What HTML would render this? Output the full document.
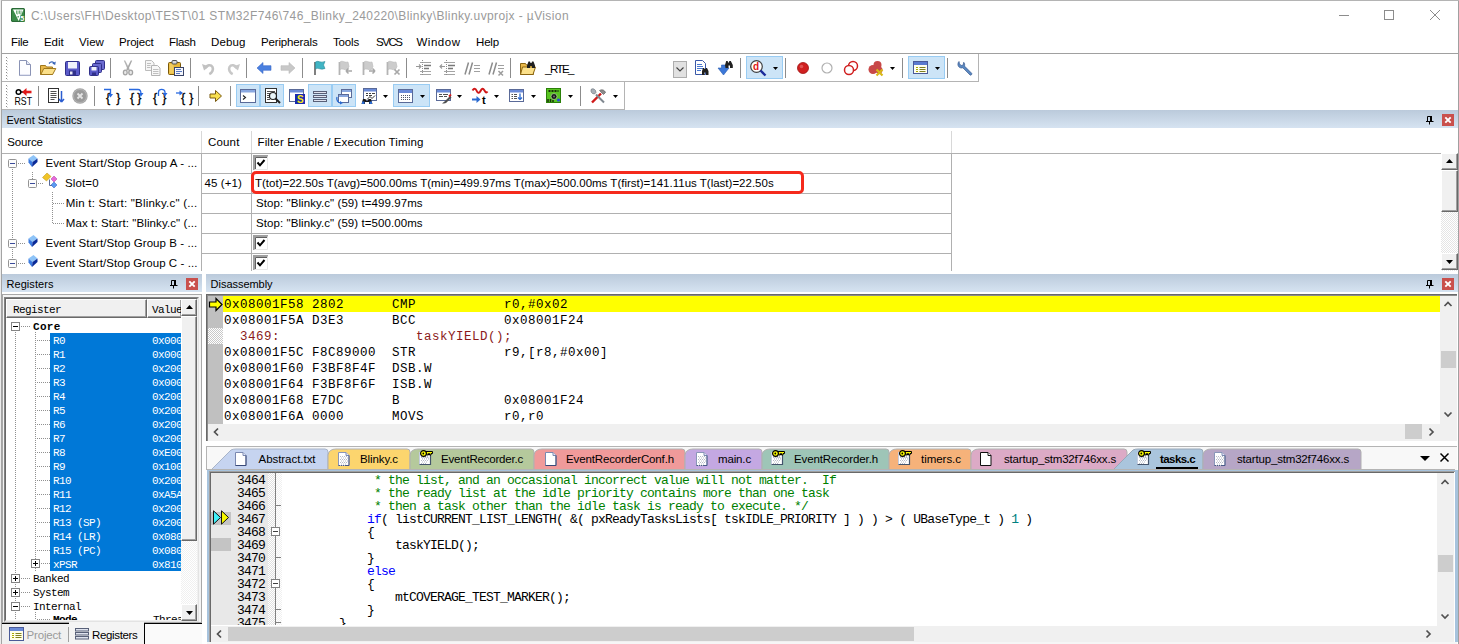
<!DOCTYPE html>
<html><head><meta charset="utf-8"><title>uVision</title>
<style>
html,body{margin:0;padding:0}
body{width:1459px;height:644px;overflow:hidden;background:#fff;position:relative;font-family:'Liberation Sans',sans-serif;}
.t{position:absolute;white-space:pre;line-height:16px;}
div{box-sizing:border-box}
.e{position:absolute;white-space:pre;font:13px/13px 'Liberation Mono',monospace;letter-spacing:-0.8px;color:#000}
</style></head><body>
<div style="position:absolute;left:0px;top:0px;width:1459px;height:1px;background:#b4b4b4;"></div>
<div style="position:absolute;left:0px;top:0px;width:1px;height:644px;background:#ececec;"></div>
<div style="position:absolute;left:1px;top:1px;width:1px;height:643px;background:#a4a4a4;"></div>
<svg style="position:absolute;left:11px;top:8px;overflow:visible" width="14" height="14" viewBox="0 0 14 14"><rect x="0" y="0" width="14" height="14" rx="1.8" fill="#327a3e"/>
<rect x=".5" y=".5" width="13" height="13" rx="1.5" fill="#3a8a48" stroke="#2a6a36"/>
<path d="M2 1.500h10.500l-4.800 11.500z" fill="#fff"/>
<path d="M5.500 2.500v3c0 .8 1.500 .8 1.500 0v-3M8.500 2.500v3c0 .8 1.500 .8 1.500 0v-3" fill="none" stroke="#4a9a58" stroke-width=".8"/>
<path d="M6 8.800l2.200-1-1 2.200z" fill="#3a8a48"/>
<rect x="9" y="7.500" width="5" height="6" fill="#3a8a48"/>
<text x="9.300" y="13" font-size="7" font-weight="bold" fill="#fff" font-family="Liberation Sans, sans-serif">5</text></svg>
<span class="t" style="left:31px;top:8px;font-size:12px;color:#9a9a9a;letter-spacing:0.390px;">C:\Users\FH\Desktop\TEST\01 STM32F746\746_Blinky_240220\Blinky\Blinky.uvprojx - µVision</span>
<svg style="position:absolute;left:1338px;top:8px;overflow:visible" width="110" height="16" viewBox="0 0 110 16"><path d="M1 7.5h10" stroke="#8c8c8c" stroke-width="1"/>
<rect x="46.5" y="2.5" width="9" height="9" fill="none" stroke="#8c8c8c"/>
<path d="M92 2l10 10M102 2l-10 10" stroke="#8c8c8c" stroke-width="1"/></svg>
<span class="t" style="left:11px;top:34px;font-size:11.5px;color:#000;letter-spacing:-0.258px;">File</span>
<span class="t" style="left:44px;top:34px;font-size:11.5px;color:#000;letter-spacing:-0.082px;">Edit</span>
<span class="t" style="left:79px;top:34px;font-size:11.5px;color:#000;letter-spacing:0.070px;">View</span>
<span class="t" style="left:119px;top:34px;font-size:11.5px;color:#000;letter-spacing:-0.185px;">Project</span>
<span class="t" style="left:169px;top:34px;font-size:11.5px;color:#000;letter-spacing:-0.325px;">Flash</span>
<span class="t" style="left:211px;top:34px;font-size:11.5px;color:#000;letter-spacing:0.122px;">Debug</span>
<span class="t" style="left:261px;top:34px;font-size:11.5px;color:#000;letter-spacing:-0.152px;">Peripherals</span>
<span class="t" style="left:333px;top:34px;font-size:11.5px;color:#000;letter-spacing:-0.172px;">Tools</span>
<span class="t" style="left:376px;top:34px;font-size:11.5px;color:#000;letter-spacing:-1.457px;">SVCS</span>
<span class="t" style="left:416.5px;top:34px;font-size:11.5px;color:#000;letter-spacing:0.516px;">Window</span>
<span class="t" style="left:476px;top:34px;font-size:11.5px;color:#000;letter-spacing:-0.164px;">Help</span>
<div style="position:absolute;left:2px;top:53px;width:1457px;height:1px;background:#a0a0a0;"></div>
<div style="position:absolute;left:2px;top:54px;width:977px;height:28px;border-right:1px solid #b4b4b4;border-bottom:1px solid #b4b4b4;"></div>
<div style="position:absolute;left:2px;top:82px;width:623px;height:28px;border-right:1px solid #b4b4b4;border-bottom:1px solid #b4b4b4;"></div>
<svg style="position:absolute;left:6px;top:57px;overflow:visible" width="3" height="24" viewBox="0 0 3 24"><rect x="0" y="0" width="1" height="1" fill="#8a8a8a"/><rect x="1" y="1" width="1" height="1" fill="#d8d8d8"/><rect x="0" y="3" width="1" height="1" fill="#8a8a8a"/><rect x="1" y="4" width="1" height="1" fill="#d8d8d8"/><rect x="0" y="6" width="1" height="1" fill="#8a8a8a"/><rect x="1" y="7" width="1" height="1" fill="#d8d8d8"/><rect x="0" y="9" width="1" height="1" fill="#8a8a8a"/><rect x="1" y="10" width="1" height="1" fill="#d8d8d8"/><rect x="0" y="12" width="1" height="1" fill="#8a8a8a"/><rect x="1" y="13" width="1" height="1" fill="#d8d8d8"/><rect x="0" y="15" width="1" height="1" fill="#8a8a8a"/><rect x="1" y="16" width="1" height="1" fill="#d8d8d8"/><rect x="0" y="18" width="1" height="1" fill="#8a8a8a"/><rect x="1" y="19" width="1" height="1" fill="#d8d8d8"/><rect x="0" y="21" width="1" height="1" fill="#8a8a8a"/><rect x="1" y="22" width="1" height="1" fill="#d8d8d8"/></svg>
<svg style="position:absolute;left:6px;top:85px;overflow:visible" width="3" height="24" viewBox="0 0 3 24"><rect x="0" y="0" width="1" height="1" fill="#8a8a8a"/><rect x="1" y="1" width="1" height="1" fill="#d8d8d8"/><rect x="0" y="3" width="1" height="1" fill="#8a8a8a"/><rect x="1" y="4" width="1" height="1" fill="#d8d8d8"/><rect x="0" y="6" width="1" height="1" fill="#8a8a8a"/><rect x="1" y="7" width="1" height="1" fill="#d8d8d8"/><rect x="0" y="9" width="1" height="1" fill="#8a8a8a"/><rect x="1" y="10" width="1" height="1" fill="#d8d8d8"/><rect x="0" y="12" width="1" height="1" fill="#8a8a8a"/><rect x="1" y="13" width="1" height="1" fill="#d8d8d8"/><rect x="0" y="15" width="1" height="1" fill="#8a8a8a"/><rect x="1" y="16" width="1" height="1" fill="#d8d8d8"/><rect x="0" y="18" width="1" height="1" fill="#8a8a8a"/><rect x="1" y="19" width="1" height="1" fill="#d8d8d8"/><rect x="0" y="21" width="1" height="1" fill="#8a8a8a"/><rect x="1" y="22" width="1" height="1" fill="#d8d8d8"/></svg>
<svg style="position:absolute;left:17px;top:60px;overflow:visible" width="16" height="16" viewBox="0 0 16 16"><path d="M2.5 .5h7l4 4v11h-11z" fill="#fdfdff" stroke="#8a93b5"/><path d="M9.5 .5v4h4" fill="#e4e8f6" stroke="#8a93b5"/><path d="M3 15h10" stroke="#c8cde4"/></svg>
<svg style="position:absolute;left:40px;top:60px;overflow:visible" width="16" height="16" viewBox="0 0 16 16"><path d="M.5 5.5h5l1 1.5h6v7.5h-12z" fill="#e8b84a" stroke="#a0781c"/><path d="M.8 14.5l3-6h12l-3.2 6z" fill="#fbe08a" stroke="#a0781c"/><path d="M9 3.5c2-2.3 4.5-2 5.5.6" fill="none" stroke="#3a66b8" stroke-width="1.2"/><path d="M15.8 1.5l-.6 3.6-3-1.6z" fill="#3a66b8"/></svg>
<svg style="position:absolute;left:65px;top:60px;overflow:visible" width="16" height="16" viewBox="0 0 16 16"><rect x=".5" y="1.500" width="14" height="14" rx="1" fill="#5a5ac8" stroke="#30308a"/><rect x="3" y="2" width="9" height="6.5" fill="#f0f2fc"/><rect x="4" y="10.500" width="7" height="5" fill="#30308a"/><rect x="5" y="11.500" width="2.500" height="3" fill="#e8e8f4"/></svg>
<svg style="position:absolute;left:89px;top:60px;overflow:visible" width="16" height="16" viewBox="0 0 16 16"><rect x="6.500" y=".5" width="9" height="9" rx="1" fill="#6a6ad0" stroke="#30308a"/><rect x="3.500" y="3.500" width="9" height="9" rx="1" fill="#6a6ad0" stroke="#30308a"/><rect x=".5" y="6.500" width="9" height="9" rx="1" fill="#5a5ac8" stroke="#30308a"/><rect x="2.500" y="7" width="5" height="3.500" fill="#f0f2fc"/><rect x="3" y="12.500" width="4" height="3" fill="#30308a"/></svg>
<div style="position:absolute;left:110px;top:58px;width:1px;height:20px;background:#8c8c8c;"></div>
<svg style="position:absolute;left:120px;top:60px;overflow:visible" width="16" height="16" viewBox="0 0 16 16"><path d="M3.800 .5h1.400l4.600 9-1.600 1.200z" fill="#b4b4b4"/><path d="M12.200 .5h-1.400l-4.600 9 1.600 1.200z" fill="#a8a8a8"/><ellipse cx="5.300" cy="12.500" rx="1.900" ry="2.400" fill="#e8e8e8" stroke="#a4a4a4" stroke-width="1.300"/><ellipse cx="10.700" cy="12.500" rx="1.900" ry="2.400" fill="#e8e8e8" stroke="#a4a4a4" stroke-width="1.300"/></svg>
<svg style="position:absolute;left:145px;top:60px;overflow:visible" width="16" height="16" viewBox="0 0 16 16"><path d="M.5 .5h6l2.500 2.500v7.500h-8.500z" fill="#f6f6f6" stroke="#bcbcbc"/><path d="M6.500 5.500h6l2.500 2.500v7.500h-8.500z" fill="#f8f8f8" stroke="#b4b4b4"/><path d="M8 9.500h5.500M8 11.500h5.500M8 13.500h5.500M2 3.500h4M2 5.500h3.500M2 7.500h3.500" stroke="#c0c0c0"/></svg>
<svg style="position:absolute;left:168px;top:60px;overflow:visible" width="16" height="16" viewBox="0 0 16 16"><rect x=".5" y="2.500" width="12" height="12" rx="1" fill="#e8b838" stroke="#7a5808"/><path d="M1.500 4v9.500h4v-9.500z" fill="#f8d878" opacity=".6"/><rect x="4" y=".5" width="5" height="3.500" rx="1" fill="#d8d8d8" stroke="#505050"/><rect x="6.500" y="7.500" width="9" height="8" fill="#f4f6fc" stroke="#3a4468"/><path d="M8 9.500h5M8 11.500h6M8 13.500h4" stroke="#5a7ac0"/></svg>
<div style="position:absolute;left:190px;top:58px;width:1px;height:20px;background:#8c8c8c;"></div>
<svg style="position:absolute;left:201px;top:60px;overflow:visible" width="16" height="16" viewBox="0 0 16 16"><path d="M4.500 8c1-3.200 5.500-3.800 7-1 1.200 2.500-.3 5.800-3.200 7.200" fill="none" stroke="#c2c2c2" stroke-width="2.600"/><path d="M1 4l2 6.500 5-4z" fill="#c2c2c2"/></svg>
<svg style="position:absolute;left:225px;top:60px;overflow:visible" width="16" height="16" viewBox="0 0 16 16"><path d="M11.500 8c-1-3.200-5.500-3.800-7-1-1.200 2.500.3 5.800 3.200 7.200" fill="none" stroke="#c8c8c8" stroke-width="2.600"/><path d="M15 4l-2 6.500-5-4z" fill="#c8c8c8"/></svg>
<div style="position:absolute;left:246px;top:58px;width:1px;height:20px;background:#8c8c8c;"></div>
<svg style="position:absolute;left:256px;top:60px;overflow:visible" width="16" height="16" viewBox="0 0 16 16"><path d="M1 8l6-5.500v3.200h8v4.600h-8v3.200z" fill="#4a80e0" stroke="#3a68c8" stroke-width=".6"/></svg>
<svg style="position:absolute;left:280px;top:60px;overflow:visible" width="16" height="16" viewBox="0 0 16 16"><path d="M15 8l-6-5.500v3.200h-8v4.600h8v3.200z" fill="#c8c8c8" stroke="#b8b8b8" stroke-width=".6"/></svg>
<div style="position:absolute;left:302px;top:58px;width:1px;height:20px;background:#8c8c8c;"></div>
<svg style="position:absolute;left:312px;top:60px;overflow:visible" width="16" height="16" viewBox="0 0 16 16"><path d="M3 2v13" stroke="#606060" stroke-width="1.600"/><path d="M3.500 2c2.500-2 5 1.500 9.500-.5l-1.500 3.500 1.500 3.500c-4.500 2-7-1.500-9.500.5z" fill="#40b4c4" stroke="#2a8a98" stroke-width=".6"/></svg>
<svg style="position:absolute;left:337px;top:60px;overflow:visible" width="16" height="16" viewBox="0 0 16 16"><path d="M2.500 2v13" stroke="#b4b4b4" stroke-width="1.800"/><path d="M3 2c2.500-2 4.500 1 8 0l1 4.500-1.500 3c-3 1-5-1.500-7.500 0z" fill="#cccccc" stroke="#b8b8b8" stroke-width=".6"/><path d="M15 11h-6m0 0l2.500-2.500M9 11l2.500 2.500" stroke="#a8a8a8" stroke-width="1.500" fill="none"/></svg>
<svg style="position:absolute;left:361px;top:60px;overflow:visible" width="16" height="16" viewBox="0 0 16 16"><path d="M2.500 2v13" stroke="#b4b4b4" stroke-width="1.800"/><path d="M3 2c2.500-2 4.500 1 8 0l1 4.500-1.500 3c-3 1-5-1.500-7.500 0z" fill="#cccccc" stroke="#b8b8b8" stroke-width=".6"/><path d="M8 11h6m0 0l-2.500-2.500M14 11l-2.500 2.500" stroke="#a8a8a8" stroke-width="1.500" fill="none"/></svg>
<svg style="position:absolute;left:385px;top:60px;overflow:visible" width="16" height="16" viewBox="0 0 16 16"><path d="M2.500 2v13" stroke="#b4b4b4" stroke-width="1.800"/><path d="M3 2c2.500-2 4.500 1 8 0l1 4.500-1.500 3c-3 1-5-1.500-7.500 0z" fill="#cccccc" stroke="#b8b8b8" stroke-width=".6"/><path d="M9.500 9.500l5 5m0-5l-5 5" stroke="#a8a8a8" stroke-width="1.700" fill="none"/></svg>
<div style="position:absolute;left:406px;top:58px;width:1px;height:20px;background:#8c8c8c;"></div>
<svg style="position:absolute;left:416px;top:60px;overflow:visible" width="16" height="16" viewBox="0 0 16 16"><path d="M4 2.500h11M4 11.500h11M4 14.500h11" stroke="#a4a4a4"/><path d="M8 5.500h7M8 8.500h5" stroke="#787878" stroke-width="1.400"/><path d="M6.500 0v16" stroke="#909090" stroke-dasharray="1 1"/><path d="M0 6.500h5M3 4.500l2 2-2 2" stroke="#989898" stroke-width="1.100" fill="none"/></svg>
<svg style="position:absolute;left:440px;top:60px;overflow:visible" width="16" height="16" viewBox="0 0 16 16"><path d="M4 2.500h11M4 11.500h11M4 14.500h11" stroke="#a4a4a4"/><path d="M8 5.500h7M8 8.500h5" stroke="#787878" stroke-width="1.400"/><path d="M6.500 0v16" stroke="#909090" stroke-dasharray="1 1"/><path d="M5 6.500h-5M2 4.500l-2 2 2 2" stroke="#989898" stroke-width="1.100" fill="none"/></svg>
<svg style="position:absolute;left:464px;top:60px;overflow:visible" width="16" height="16" viewBox="0 0 16 16"><path d="M1 14.500l3.500-12M5 14.500l3.500-12" stroke="#8c8c8c" stroke-width="1.500"/><path d="M10 5.500h6M10 8.500h6M10 11.500h6" stroke="#a0a0a0" stroke-width="1.200"/></svg>
<svg style="position:absolute;left:488px;top:60px;overflow:visible" width="16" height="16" viewBox="0 0 16 16"><path d="M1 14.500l3.500-12M5 14.500l3.500-12" stroke="#8c8c8c" stroke-width="1.500"/><path d="M10 5.500h6M10 8.500h6" stroke="#a0a0a0" stroke-width="1.200"/><path d="M10.500 11l4.500 4.500m0-4.500l-4.500 4.500" stroke="#9c9c9c" stroke-width="1.500"/></svg>
<div style="position:absolute;left:510px;top:58px;width:1px;height:20px;background:#8c8c8c;"></div>
<svg style="position:absolute;left:520px;top:60px;overflow:visible" width="16" height="16" viewBox="0 0 16 16"><path d="M.5 3.500h5l1 1.500h7v9.500h-13z" fill="#e8b84a" stroke="#8a6410"/><path d="M.5 14.500l2-7.500h13l-2.500 7.500z" fill="#fbe08a" stroke="#8a6410"/><path d="M7 5.500l1.500-4h1.500l.5 1.500h1l.5-1.500h1.500l1.500 4v2.500h-3v-2h-2v2h-3z" fill="#202020"/></svg>
<span class="t" style="left:545px;top:61px;font-size:11.5px;color:#000;letter-spacing:-1.519px;">_RTE_</span>
<div style="position:absolute;left:673px;top:61px;width:14px;height:17px;background:#e1e1e1;border:1px solid #adadad;"></div>
<svg style="position:absolute;left:676px;top:67px;overflow:visible" width="8" height="5" viewBox="0 0 8 5"><path d="M.5 .5l3.500 3.500 3.500-3.500" fill="none" stroke="#404040" stroke-width="1.100"/></svg>
<svg style="position:absolute;left:694px;top:60px;overflow:visible" width="16" height="16" viewBox="0 0 16 16"><path d="M1.500 .5h7l3 3v11h-10z" fill="#fff" stroke="#3a58a8"/><path d="M3 4.500h5M3 6.500h6M3 8.500h6M3 10.500h4" stroke="#4a78d0"/><path d="M8 11l1-3h1.200l.3 1h1l.3-1h1.200l1.500 3v4h-2.500v-2.500h-1.500v2.500h-2.500z" fill="#202020"/></svg>
<svg style="position:absolute;left:717px;top:60px;overflow:visible" width="16" height="16" viewBox="0 0 16 16"><path d="M2 6h3.500v-3h4v3h3.500l-5.500 7z" fill="#3c78d8" stroke="#2a5cb0" stroke-width=".6" transform="translate(-1,2)"/><path d="M8 5l1.200-4h1.500l.3 1.500h1l.3-1.500h1.500l2 4v3h-2.800v-2.500h-1.500v2.500h-3z" fill="#202020"/></svg>
<div style="position:absolute;left:740px;top:58px;width:1px;height:20px;background:#8c8c8c;"></div>
<div style="position:absolute;left:746px;top:56px;width:37px;height:23px;background:#cce4f7;border:1px solid #99ccf3;"></div>
<svg style="position:absolute;left:750px;top:60px;overflow:visible" width="16" height="16" viewBox="0 0 16 16"><circle cx="6.500" cy="6.500" r="5.800" fill="#fff" stroke="#404040" stroke-width="1.200"/><path d="M10.500 10.500l5 5" stroke="#1a2a9a" stroke-width="2.400"/><text x="3" y="10" font-size="10" font-weight="bold" fill="#e01818" font-family="Liberation Sans, sans-serif">d</text></svg>
<svg style="position:absolute;left:773px;top:67px;overflow:visible" width="5" height="3" viewBox="0 0 5 3"><path d="M0 0h5l-2.5 3z" fill="#000"/></svg>
<div style="position:absolute;left:785px;top:58px;width:1px;height:20px;background:#8c8c8c;"></div>
<svg style="position:absolute;left:795px;top:60px;overflow:visible" width="16" height="16" viewBox="0 0 16 16"><circle cx="8" cy="8" r="5.500" fill="#d02020" stroke="#a01010" stroke-width=".8"/><circle cx="6.500" cy="6.500" r="1.800" fill="#e86a6a" opacity=".7"/></svg>
<svg style="position:absolute;left:819px;top:60px;overflow:visible" width="16" height="16" viewBox="0 0 16 16"><circle cx="8" cy="8" r="5" fill="#fff" stroke="#b0b0b0" stroke-width="1.200"/></svg>
<svg style="position:absolute;left:843px;top:60px;overflow:visible" width="16" height="16" viewBox="0 0 16 16"><circle cx="10" cy="6" r="4.500" fill="#fff" stroke="#d02020" stroke-width="1.500"/><circle cx="6" cy="10" r="4.500" fill="#fff" stroke="#d02020" stroke-width="1.500"/></svg>
<svg style="position:absolute;left:868px;top:60px;overflow:visible" width="16" height="16" viewBox="0 0 16 16"><circle cx="9.500" cy="5" r="4" fill="#c84848"/><circle cx="5" cy="9.500" r="4.500" fill="#c84848"/><circle cx="11" cy="10" r="3.500" fill="#c84848"/><path d="M8.500 9.500l6 6m0-6l-6 6" stroke="#d8b818" stroke-width="2.200"/></svg>
<svg style="position:absolute;left:890px;top:67px;overflow:visible" width="5" height="3" viewBox="0 0 5 3"><path d="M0 0h5l-2.5 3z" fill="#000"/></svg>
<div style="position:absolute;left:902px;top:58px;width:1px;height:20px;background:#8c8c8c;"></div>
<div style="position:absolute;left:908px;top:56px;width:37px;height:23px;background:#cce4f7;border:1px solid #99ccf3;"></div>
<svg style="position:absolute;left:913px;top:60px;overflow:visible" width="16" height="16" viewBox="0 0 16 16"><rect x=".5" y="1.500" width="14" height="12" fill="#fffff0" stroke="#4a5a98"/><rect x="1" y="2" width="13" height="3" fill="#5a7ad0"/><path d="M3 7.500h2M3 9.500h2M3 11.500h2" stroke="#a8a800" stroke-width="1.200"/><path d="M6.500 7.500h6M6.500 9.500h6M6.500 11.500h6" stroke="#808020" stroke-width="1.200"/></svg>
<svg style="position:absolute;left:935px;top:67px;overflow:visible" width="5" height="3" viewBox="0 0 5 3"><path d="M0 0h5l-2.5 3z" fill="#000"/></svg>
<div style="position:absolute;left:947px;top:58px;width:1px;height:20px;background:#8c8c8c;"></div>
<svg style="position:absolute;left:957px;top:60px;overflow:visible" width="16" height="16" viewBox="0 0 16 16"><path d="M2 1.500c-1.500 1.500-1.500 4 0 5.500 1 1 2.500 1.200 3.800.8l7.200 7.200c.8.800 2.500-.8 1.700-1.700l-7.200-7.200c.4-1.300.2-2.800-.8-3.800l-.5 2.700-2 .5-1.700-1.700z" fill="#5a88c0" stroke="#3a5a90" stroke-width=".7"/></svg>
<svg style="position:absolute;left:15px;top:88px;overflow:visible" width="16" height="16" viewBox="0 0 16 16"><circle cx="3.500" cy="4" r="2.300" fill="none" stroke="#000" stroke-width="1.500"/><path d="M5.500 4h3" stroke="#000" stroke-width="1.400"/><path d="M16.500 4h-6" stroke="#e01818" stroke-width="2.600"/><path d="M7 4l4.500-4v8z" fill="#e01818"/><text x="-.5" y="17" font-size="10.500" fill="#000" font-family="Liberation Sans, sans-serif" textLength="17.500" lengthAdjust="spacingAndGlyphs">RST</text></svg>
<div style="position:absolute;left:38px;top:86px;width:1px;height:20px;background:#8c8c8c;"></div>
<svg style="position:absolute;left:48px;top:88px;overflow:visible" width="16" height="16" viewBox="0 0 16 16"><rect x=".5" y=".5" width="10" height="14" fill="#fff" stroke="#303030"/><path d="M2.500 3.500h6M2.500 5.500h6M2.500 7.500h6M2.500 9.500h6M2.500 11.500h4" stroke="#505050"/><path d="M13.500 3v11m0 0l-2.500-3m2.500 3l2.500-3" stroke="#2a5cd0" stroke-width="1.500" fill="none"/></svg>
<svg style="position:absolute;left:72px;top:88px;overflow:visible" width="16" height="16" viewBox="0 0 16 16"><circle cx="8" cy="8" r="7.700" fill="#a4a4a4"/><circle cx="8" cy="8" r="6.500" fill="#9a9a9a" stroke="#c0c0c0" stroke-width=".6"/><path d="M5.500 5.500l5 5m0-5l-5 5" stroke="#e4e4e4" stroke-width="1.800"/></svg>
<div style="position:absolute;left:94px;top:86px;width:1px;height:20px;background:#8c8c8c;"></div>
<svg style="position:absolute;left:104px;top:88px;overflow:visible" width="16" height="16" viewBox="0 0 16 16"><text x="2" y="14" font-size="12.500" stroke="#000" stroke-width=".3" fill="#000" font-family="Liberation Sans, sans-serif" textLength="14.5" lengthAdjust="spacing">{}</text><path d="M0 1.500h6.500v6" fill="none" stroke="#2a6ae0" stroke-width="1.300"/><path d="M4 6l2.500 3.500 2.500-3.500z" fill="#2a6ae0"/></svg>
<svg style="position:absolute;left:128px;top:88px;overflow:visible" width="16" height="16" viewBox="0 0 16 16"><text x="2" y="14" font-size="12.500" stroke="#000" stroke-width=".3" fill="#000" font-family="Liberation Sans, sans-serif" textLength="11.5" lengthAdjust="spacing">{}</text><path d="M1 1.500h9c2.500 0 3 1.500 3 4.500" fill="none" stroke="#2a6ae0" stroke-width="1.300"/><path d="M10.500 5l2.500 3.500 2.500-3.500z" fill="#2a6ae0"/></svg>
<svg style="position:absolute;left:152px;top:88px;overflow:visible" width="16" height="16" viewBox="0 0 16 16"><text x="1" y="14" font-size="12.500" stroke="#000" stroke-width=".3" fill="#000" font-family="Liberation Sans, sans-serif" textLength="13.5" lengthAdjust="spacing">{}</text><path d="M6.500 8v-4c0-3.500 6-3.500 6.500 0v2" fill="none" stroke="#2a6ae0" stroke-width="1.300"/><path d="M10.500 5l2.500 3.500 2.500-3.500z" fill="#2a6ae0"/></svg>
<svg style="position:absolute;left:176px;top:88px;overflow:visible" width="16" height="16" viewBox="0 0 16 16"><text x="5" y="14" font-size="12.500" stroke="#000" stroke-width=".3" fill="#000" font-family="Liberation Sans, sans-serif" textLength="12.5" lengthAdjust="spacing">{}</text><path d="M0 5h4.500" stroke="#2a6ae0" stroke-width="1.300"/><path d="M3.500 2.500l3.500 2.500-3.500 2.500z" fill="#2a6ae0"/></svg>
<div style="position:absolute;left:198px;top:86px;width:1px;height:20px;background:#8c8c8c;"></div>
<svg style="position:absolute;left:208px;top:88px;overflow:visible" width="16" height="16" viewBox="0 0 16 16"><path d="M2 6h5.500v-3.500l6 5.500-6 5.500v-3.500h-5.500z" fill="#f8e050" stroke="#7a5a10" stroke-width="1"/></svg>
<div style="position:absolute;left:230px;top:86px;width:1px;height:20px;background:#8c8c8c;"></div>
<div style="position:absolute;left:236px;top:84px;width:24px;height:23px;background:#cce4f7;border:1px solid #99ccf3;"></div>
<svg style="position:absolute;left:240px;top:88px;overflow:visible" width="16" height="16" viewBox="0 0 16 16"><rect x=".5" y="1.500" width="15" height="13" fill="#fff" stroke="#5a6a98"/><rect x="1" y="2" width="14" height="2.500" fill="#8aa8e0"/><path d="M3 7.500l2.500 2-2.500 2" stroke="#202020" stroke-width="1.100" fill="none"/></svg>
<div style="position:absolute;left:260px;top:84px;width:24px;height:23px;background:#cce4f7;border:1px solid #99ccf3;"></div>
<svg style="position:absolute;left:265px;top:88px;overflow:visible" width="16" height="16" viewBox="0 0 16 16"><rect x=".5" y=".5" width="11" height="14" fill="#fff" stroke="#303030"/><path d="M2 3.500h8M2 5.500h3M2 7.500h2M2 9.500h2M2 11.500h3" stroke="#505050"/><circle cx="8" cy="8" r="3.500" fill="#e8f4f8" stroke="#202020" stroke-width="1.200"/><path d="M10.500 10.500l4.500 4.500" stroke="#202020" stroke-width="2"/></svg>
<svg style="position:absolute;left:289px;top:88px;overflow:visible" width="16" height="16" viewBox="0 0 16 16"><rect x=".5" y="1.500" width="14" height="12" fill="#fff" stroke="#5a6a98"/><rect x="1" y="2" width="13" height="2.500" fill="#6a8ad8"/><rect x="6" y="6" width="10" height="10" fill="#1a2ab0"/><text x="8" y="15" font-size="10" font-weight="bold" fill="#f8e818" font-family="Liberation Sans, sans-serif">S</text></svg>
<div style="position:absolute;left:308px;top:84px;width:24px;height:23px;background:#cce4f7;border:1px solid #99ccf3;"></div>
<svg style="position:absolute;left:312px;top:88px;overflow:visible" width="16" height="16" viewBox="0 0 16 16"><rect x="1.500" y="3.500" width="13" height="2" fill="#e0e4f0" stroke="#586078"/><rect x="1.500" y="7.500" width="13" height="2" fill="#e0e4f0" stroke="#586078"/><rect x="1.500" y="11.500" width="13" height="2" fill="#e0e4f0" stroke="#586078"/></svg>
<div style="position:absolute;left:332px;top:84px;width:24px;height:23px;background:#cce4f7;border:1px solid #99ccf3;"></div>
<svg style="position:absolute;left:336px;top:88px;overflow:visible" width="16" height="16" viewBox="0 0 16 16"><rect x="5.500" y="1.500" width="10" height="8" fill="#fff" stroke="#5a6a98"/><rect x="6" y="2" width="9" height="2" fill="#8aa8e0"/><rect x="2.500" y="6.500" width="10" height="8" fill="#fff" stroke="#5a6a98"/><rect x="3" y="7" width="9" height="2" fill="#8aa8e0"/><path d="M1 9c-1 3 1 6 4 6" fill="none" stroke="#2a6ad0" stroke-width="1.300"/><path d="M4 13l3 2-3 1.500z" fill="#2a6ad0"/></svg>
<svg style="position:absolute;left:361px;top:88px;overflow:visible" width="16" height="16" viewBox="0 0 16 16"><rect x="2.500" y=".5" width="13" height="12" fill="#fff" stroke="#5a6a98"/><rect x="3" y="1" width="12" height="2.500" fill="#6a8ad8"/><path d="M5 5.500h2M8 5.500h2M11 5.500h3M5 7.500h2M8 7.500h3" stroke="#404040"/><path d="M6 11.500l3-3 2 2 3-3" fill="none" stroke="#303030"/><path d="M.5 16l1.500-5h2.500l.8 2h1.400l.8-2h2.500l1.500 5h-3.500v-2h-4v2z" fill="#181818"/><rect x="1" y="13.500" width="2.500" height="2.500" fill="#2a6ad0"/><rect x="8.500" y="13.500" width="2.500" height="2.500" fill="#2a6ad0"/></svg>
<svg style="position:absolute;left:383px;top:95px;overflow:visible" width="5" height="3" viewBox="0 0 5 3"><path d="M0 0h5l-2.5 3z" fill="#000"/></svg>
<div style="position:absolute;left:393px;top:84px;width:37px;height:23px;background:#cce4f7;border:1px solid #99ccf3;"></div>
<svg style="position:absolute;left:398px;top:88px;overflow:visible" width="16" height="16" viewBox="0 0 16 16"><rect x=".5" y="1.500" width="14" height="13" fill="#fff" stroke="#5a6a98"/><rect x="1" y="2" width="13" height="3" fill="#6a8ad8"/><path d="M3 7.500h10M3 9.500h10M3 11.500h10" stroke="#505868" stroke-dasharray="1 1"/></svg>
<svg style="position:absolute;left:420px;top:95px;overflow:visible" width="5" height="3" viewBox="0 0 5 3"><path d="M0 0h5l-2.5 3z" fill="#000"/></svg>
<svg style="position:absolute;left:436px;top:88px;overflow:visible" width="16" height="16" viewBox="0 0 16 16"><rect x=".5" y="1.500" width="14" height="11" fill="#fff" stroke="#5a6a98"/><rect x="1" y="2" width="13" height="2.500" fill="#6a8ad8"/><path d="M3 6.500h3M7 6.500h5M3 8.500h4M8 8.500h3" stroke="#505050"/><path d="M6 15.500l2.500-2 5.500-5.500 1.500 1.500-5.500 5.500-2 .5z" fill="#505050"/><path d="M13 8.500l2-2" stroke="#d02020" stroke-width="1.800"/></svg>
<svg style="position:absolute;left:457px;top:95px;overflow:visible" width="5" height="3" viewBox="0 0 5 3"><path d="M0 0h5l-2.5 3z" fill="#000"/></svg>
<svg style="position:absolute;left:472px;top:88px;overflow:visible" width="16" height="16" viewBox="0 0 16 16"><path d="M.5 2.500c1.500-2.500 3-2.500 4 0s2.500 3.500 4 .5 2.500-3 4-.5 2 2.500 3 1" fill="none" stroke="#d01818" stroke-width="2"/><path d="M0 11.500h5" stroke="#2a6ad0" stroke-width="2"/><path d="M4.500 8l4 3.500-4 3.500z" fill="#2a6ad0"/><text x="10" y="15.500" font-size="11" font-weight="bold" fill="#000" font-family="Liberation Sans, sans-serif">t</text></svg>
<svg style="position:absolute;left:494px;top:95px;overflow:visible" width="5" height="3" viewBox="0 0 5 3"><path d="M0 0h5l-2.5 3z" fill="#000"/></svg>
<svg style="position:absolute;left:509px;top:88px;overflow:visible" width="16" height="16" viewBox="0 0 16 16"><rect x=".5" y="1.500" width="14" height="12" fill="#fff" stroke="#5a6a98"/><rect x="1" y="2" width="13" height="2.500" fill="#6a8ad8"/><path d="M2.500 6.500h1.500M5 6.500h3M2.500 8.500h1.500M5 8.500h3M2.500 10.500h1.500M5 10.500h3" stroke="#505050"/><path d="M11 5.500v6m0 0l-2-2m2 2l2-2" stroke="#2a6ad0" stroke-width="1.300" fill="none"/></svg>
<svg style="position:absolute;left:531px;top:95px;overflow:visible" width="5" height="3" viewBox="0 0 5 3"><path d="M0 0h5l-2.5 3z" fill="#000"/></svg>
<svg style="position:absolute;left:546px;top:88px;overflow:visible" width="16" height="16" viewBox="0 0 16 16"><rect x=".5" y=".5" width="14" height="14" fill="#58c420" stroke="#2a8008"/><path d="M2.500 3h10" stroke="#183008" stroke-dasharray="2 1" stroke-width="2"/><circle cx="8" cy="8.500" r="3" fill="#181818" stroke="#a8d890" stroke-width=".8"/><circle cx="8" cy="8.500" r="1" fill="#707070"/><circle cx="12.500" cy="12" r="1.600" fill="#2a4ad8"/><path d="M2 11v3M4.500 11v3M7 12v2" stroke="#183008" stroke-width="1.500"/></svg>
<svg style="position:absolute;left:568px;top:95px;overflow:visible" width="5" height="3" viewBox="0 0 5 3"><path d="M0 0h5l-2.5 3z" fill="#000"/></svg>
<div style="position:absolute;left:580px;top:86px;width:1px;height:20px;background:#8c8c8c;"></div>
<svg style="position:absolute;left:590px;top:88px;overflow:visible" width="16" height="16" viewBox="0 0 16 16"><path d="M2 14.500l9-9" stroke="#d01818" stroke-width="2.400"/><path d="M9.500 2.500l4 4 2-2c-1-2.500-3.500-3.500-6-2z" fill="#8a8a8a" stroke="#505050" stroke-width=".6"/><path d="M14 14.500l-8-8" stroke="#808890" stroke-width="2"/><path d="M1.500 1c-1 1.500-.5 3.500 1 4.500l2 .5 1.500-1.500-.5-2c-1-1.500-2.500-2-4-1.500z" fill="#a8b0b8" stroke="#606870" stroke-width=".6"/></svg>
<svg style="position:absolute;left:613px;top:95px;overflow:visible" width="5" height="3" viewBox="0 0 5 3"><path d="M0 0h5l-2.5 3z" fill="#000"/></svg>
<div style="position:absolute;left:2px;top:110px;width:1457px;height:18px;background:linear-gradient(#bbcadb,#d6e3f1);"></div>
<span class="t" style="left:6.5px;top:112px;font-size:11px;color:#000;letter-spacing:0.019px;">Event Statistics</span>
<svg style="position:absolute;left:1426px;top:116px;overflow:visible" width="8" height="9" viewBox="0 0 8 9"><path d="M1.500 5.500V.5h4v5" stroke="#000" stroke-width="1" fill="none"/><path d="M5 0v5.500" stroke="#000" stroke-width="2"/><path d="M0 5.500h7.500" stroke="#000" stroke-width="1"/><path d="M3.500 6v2.500" stroke="#000" stroke-width="1"/></svg>
<div style="position:absolute;left:1442px;top:114px;width:12px;height:12px;background:#c9504c;"></div>
<svg style="position:absolute;left:1445px;top:117px;overflow:visible" width="6" height="6" viewBox="0 0 6 6"><path d="M.3 .3l5.400 5.400m0-5.400l-5.400 5.400" stroke="#fff" stroke-width="1.900"/></svg>
<span class="t" style="left:7.2px;top:134px;font-size:11.5px;color:#000;letter-spacing:-0.140px;">Source</span>
<span class="t" style="left:208px;top:134px;font-size:11.5px;color:#000;letter-spacing:0.163px;">Count</span>
<span class="t" style="left:257.5px;top:134px;font-size:11.5px;color:#000;letter-spacing:0.134px;">Filter Enable / Execution Timing</span>
<div style="position:absolute;left:2px;top:153px;width:1439px;height:1px;background:#b0b0b0;"></div>
<div style="position:absolute;left:201px;top:173px;width:750px;height:1px;background:#b0b0b0;"></div>
<div style="position:absolute;left:201px;top:193px;width:750px;height:1px;background:#b0b0b0;"></div>
<div style="position:absolute;left:201px;top:213px;width:750px;height:1px;background:#b0b0b0;"></div>
<div style="position:absolute;left:201px;top:233px;width:750px;height:1px;background:#b0b0b0;"></div>
<div style="position:absolute;left:201px;top:253px;width:750px;height:1px;background:#b0b0b0;"></div>
<div style="position:absolute;left:201px;top:131px;width:1px;height:140px;background:#d8d8d8;"></div>
<div style="position:absolute;left:251px;top:131px;width:1px;height:140px;background:#d8d8d8;"></div>
<div style="position:absolute;left:201px;top:153px;width:1px;height:118px;background:#b0b0b0;"></div>
<div style="position:absolute;left:251px;top:153px;width:1px;height:118px;background:#b0b0b0;"></div>
<div style="position:absolute;left:951px;top:131px;width:1px;height:140px;background:#d8d8d8;"></div>
<div style="position:absolute;left:951px;top:153px;width:1px;height:118px;background:#b0b0b0;"></div>
<div style="position:absolute;left:12px;top:169px;width:1px;height:90px;background:repeating-linear-gradient(180deg,#909090 0 1px,transparent 1px 2px);"></div>
<div style="position:absolute;left:18px;top:163px;width:8px;height:1px;background:repeating-linear-gradient(90deg,#909090 0 1px,transparent 1px 2px);"></div>
<div style="position:absolute;left:18px;top:243px;width:8px;height:1px;background:repeating-linear-gradient(90deg,#909090 0 1px,transparent 1px 2px);"></div>
<div style="position:absolute;left:18px;top:263px;width:8px;height:1px;background:repeating-linear-gradient(90deg,#909090 0 1px,transparent 1px 2px);"></div>
<div style="position:absolute;left:32px;top:172px;width:1px;height:7px;background:repeating-linear-gradient(180deg,#909090 0 1px,transparent 1px 2px);"></div>
<div style="position:absolute;left:38px;top:183px;width:6px;height:1px;background:repeating-linear-gradient(90deg,#909090 0 1px,transparent 1px 2px);"></div>
<div style="position:absolute;left:52px;top:192px;width:1px;height:32px;background:repeating-linear-gradient(180deg,#909090 0 1px,transparent 1px 2px);"></div>
<div style="position:absolute;left:53px;top:203px;width:12px;height:1px;background:repeating-linear-gradient(90deg,#909090 0 1px,transparent 1px 2px);"></div>
<div style="position:absolute;left:53px;top:223px;width:12px;height:1px;background:repeating-linear-gradient(90deg,#909090 0 1px,transparent 1px 2px);"></div>
<svg style="position:absolute;left:8px;top:159px;overflow:visible" width="9" height="9" viewBox="0 0 9 9"><rect x=".5" y=".5" width="8" height="8" rx="1" fill="#fcfcfc" stroke="#949494"/><path d="M2 4.500h5" stroke="#3a4a9a"/></svg>
<svg style="position:absolute;left:8px;top:239px;overflow:visible" width="9" height="9" viewBox="0 0 9 9"><rect x=".5" y=".5" width="8" height="8" rx="1" fill="#fcfcfc" stroke="#949494"/><path d="M2 4.500h5" stroke="#3a4a9a"/></svg>
<svg style="position:absolute;left:8px;top:259px;overflow:visible" width="9" height="9" viewBox="0 0 9 9"><rect x=".5" y=".5" width="8" height="8" rx="1" fill="#fcfcfc" stroke="#949494"/><path d="M2 4.500h5" stroke="#3a4a9a"/></svg>
<svg style="position:absolute;left:28px;top:179px;overflow:visible" width="9" height="9" viewBox="0 0 9 9"><rect x=".5" y=".5" width="8" height="8" rx="1" fill="#fcfcfc" stroke="#949494"/><path d="M2 4.500h5" stroke="#3a4a9a"/></svg>
<svg style="position:absolute;left:28px;top:155px;overflow:visible" width="10" height="12" viewBox="0 0 10 12"><path d="M5.500 0l4 3.500-5 3.500-4-3.500z" fill="#8ec4f8"/><path d="M.5 3.500l4 3.500-.5 5-3.500-4.500z" fill="#3a7ae0"/><path d="M9.500 3.500l-5 3.500-.5 5 5.500-5z" fill="#0a2a98"/></svg>
<svg style="position:absolute;left:28px;top:235px;overflow:visible" width="10" height="12" viewBox="0 0 10 12"><path d="M5.500 0l4 3.500-5 3.500-4-3.500z" fill="#8ec4f8"/><path d="M.5 3.500l4 3.500-.5 5-3.500-4.500z" fill="#3a7ae0"/><path d="M9.500 3.500l-5 3.500-.5 5 5.500-5z" fill="#0a2a98"/></svg>
<svg style="position:absolute;left:28px;top:255px;overflow:visible" width="10" height="12" viewBox="0 0 10 12"><path d="M5.500 0l4 3.500-5 3.500-4-3.500z" fill="#8ec4f8"/><path d="M.5 3.500l4 3.500-.5 5-3.500-4.500z" fill="#3a7ae0"/><path d="M9.500 3.500l-5 3.500-.5 5 5.500-5z" fill="#0a2a98"/></svg>
<svg style="position:absolute;left:42px;top:173px;overflow:visible" width="16" height="16" viewBox="0 0 16 16"><path d="M5 0l4 3.500-4.500 4.500-4-3.500z" fill="#f0c428" stroke="#b89010" stroke-width=".5"/><path d="M7.500 6.500v6h3" fill="none" stroke="#5a6a98" stroke-width="1"/><path d="M12 3l3 3-3 3-3-3z" fill="#e868d8" stroke="#a040a0" stroke-width=".5"/><path d="M12 9l3 3-3 3-3-3z" fill="#5a9af0" stroke="#2a5ac0" stroke-width=".5"/></svg>
<span class="t" style="left:45.4px;top:155px;font-size:11.5px;color:#000;letter-spacing:0.123px;">Event Start/Stop Group A - ...</span>
<span class="t" style="left:65px;top:175px;font-size:11.5px;color:#000;letter-spacing:0.127px;">Slot=0</span>
<span class="t" style="left:204.6px;top:175px;font-size:11.5px;color:#000;letter-spacing:0.062px;">45 (+1)</span>
<span class="t" style="left:255px;top:175px;font-size:11.5px;color:#000;letter-spacing:0.003px;">T(tot)=22.50s T(avg)=500.00ms T(min)=499.97ms T(max)=500.00ms T(first)=141.11us T(last)=22.50s</span>
<span class="t" style="left:65.8px;top:195px;font-size:11.5px;color:#000;letter-spacing:0.209px;">Min t: Start: "Blinky.c" (...</span>
<span class="t" style="left:256px;top:195px;font-size:11.5px;color:#000;letter-spacing:0.077px;">Stop: "Blinky.c" (59) t=499.97ms</span>
<span class="t" style="left:65.8px;top:215px;font-size:11.5px;color:#000;letter-spacing:0.099px;">Max t: Start: "Blinky.c" (...</span>
<span class="t" style="left:256px;top:215px;font-size:11.5px;color:#000;letter-spacing:0.077px;">Stop: "Blinky.c" (59) t=500.00ms</span>
<span class="t" style="left:45.4px;top:235px;font-size:11.5px;color:#000;letter-spacing:0.081px;">Event Start/Stop Group B - ...</span>
<span class="t" style="left:45.4px;top:255px;font-size:11.5px;color:#000;letter-spacing:0.060px;">Event Start/Stop Group C - ...</span>
<svg style="position:absolute;left:254px;top:156px;overflow:visible" width="14" height="14" viewBox="0 0 14 14"><rect x="0" y="0" width="14" height="14" fill="#fff"/><path d="M0 14V0h14" fill="none" stroke="#a0a0a0" stroke-width="2"/><path d="M1.500 13V1.500h11.500" fill="none" stroke="#606060" stroke-width="1"/><path d="M.5 13.500h13v-13" fill="none" stroke="#e8e8e8" stroke-width="1"/><path d="M3.500 6.500l2.500 2.800 4.500-5.300" fill="none" stroke="#000" stroke-width="2"/></svg>
<svg style="position:absolute;left:254px;top:236px;overflow:visible" width="14" height="14" viewBox="0 0 14 14"><rect x="0" y="0" width="14" height="14" fill="#fff"/><path d="M0 14V0h14" fill="none" stroke="#a0a0a0" stroke-width="2"/><path d="M1.500 13V1.500h11.500" fill="none" stroke="#606060" stroke-width="1"/><path d="M.5 13.500h13v-13" fill="none" stroke="#e8e8e8" stroke-width="1"/><path d="M3.500 6.500l2.500 2.800 4.500-5.300" fill="none" stroke="#000" stroke-width="2"/></svg>
<svg style="position:absolute;left:254px;top:256px;overflow:visible" width="14" height="14" viewBox="0 0 14 14"><rect x="0" y="0" width="14" height="14" fill="#fff"/><path d="M0 14V0h14" fill="none" stroke="#a0a0a0" stroke-width="2"/><path d="M1.500 13V1.500h11.500" fill="none" stroke="#606060" stroke-width="1"/><path d="M.5 13.500h13v-13" fill="none" stroke="#e8e8e8" stroke-width="1"/><path d="M3.500 6.500l2.500 2.800 4.500-5.300" fill="none" stroke="#000" stroke-width="2"/></svg>
<div style="position:absolute;left:251px;top:171px;width:553px;height:23px;border:3px solid #f52a1c;border-radius:5px;"></div>
<div style="position:absolute;left:1441px;top:153px;width:17px;height:118px;background:repeating-conic-gradient(#fff 0 25%,#e4e4e4 0 50%) 0 0/2px 2px;"></div>
<div style="position:absolute;left:1441px;top:153px;width:17px;height:17px;background:#f0f0f0;border:1px solid;border-color:#fff #696969 #696969 #fff;box-shadow:inset -1px -1px 0 #a0a0a0;"></div>
<svg style="position:absolute;left:1446px;top:159px;overflow:visible" width="7" height="4" viewBox="0 0 7 4"><path d="M0 4h7l-3.500-4z" fill="#000"/></svg>
<div style="position:absolute;left:1441px;top:170px;width:17px;height:42px;background:#f0f0f0;border:1px solid;border-color:#fff #696969 #696969 #fff;box-shadow:inset -1px -1px 0 #a0a0a0;"></div>
<div style="position:absolute;left:1441px;top:253px;width:17px;height:17px;background:#f0f0f0;border:1px solid;border-color:#fff #696969 #696969 #fff;box-shadow:inset -1px -1px 0 #a0a0a0;"></div>
<svg style="position:absolute;left:1446px;top:260px;overflow:visible" width="7" height="4" viewBox="0 0 7 4"><path d="M0 0h7l-3.500 4z" fill="#000"/></svg>
<div style="position:absolute;left:2px;top:274px;width:200px;height:18px;background:linear-gradient(#bbcadb,#d6e3f1);"></div>
<span class="t" style="left:6.5px;top:276px;font-size:11px;color:#000;letter-spacing:0.059px;">Registers</span>
<svg style="position:absolute;left:170px;top:280px;overflow:visible" width="8" height="9" viewBox="0 0 8 9"><path d="M1.500 5.500V.5h4v5" stroke="#000" stroke-width="1" fill="none"/><path d="M5 0v5.500" stroke="#000" stroke-width="2"/><path d="M0 5.500h7.500" stroke="#000" stroke-width="1"/><path d="M3.500 6v2.500" stroke="#000" stroke-width="1"/></svg>
<div style="position:absolute;left:186px;top:278px;width:12px;height:12px;background:#c9504c;"></div>
<svg style="position:absolute;left:189px;top:281px;overflow:visible" width="6" height="6" viewBox="0 0 6 6"><path d="M.3 .3l5.400 5.400m0-5.400l-5.400 5.400" stroke="#fff" stroke-width="1.900"/></svg>
<div style="position:absolute;left:2px;top:294px;width:200px;height:329px;background:#f4f4f4;border:1px solid #a8a8a8;"></div>
<div style="position:absolute;left:2px;top:623px;width:200px;height:21px;background:#f0f0f0;"></div>
<div style="position:absolute;left:4px;top:297px;width:195px;height:325px;background:#fff;border:1px solid;border-color:#828282 #e3e3e3 #e3e3e3 #828282;"></div>
<div style="position:absolute;left:5px;top:298px;width:193px;height:323px;border:1px solid;border-color:#696969 #f0f0f0 #f0f0f0 #696969;"></div>
<div style="position:absolute;left:6px;top:299px;width:141px;height:19px;background:#f0f0f0;border:1px solid;border-color:#fff #696969 #696969 #fff;box-shadow:inset -1px -1px 0 #a0a0a0;"></div>
<div style="position:absolute;left:147px;top:299px;width:35px;height:19px;background:#f0f0f0;border:1px solid;border-color:#fff #696969 #696969 #fff;box-shadow:inset -1px -1px 0 #a0a0a0;"></div>
<span class="t" style="left:13px;top:302px;font-size:11px;color:#000;font-family:'Liberation Mono',monospace;letter-spacing:-0.600px;">Register</span>
<span class="t" style="left:152px;top:302px;font-size:11px;color:#000;font-family:'Liberation Mono',monospace;letter-spacing:-0.600px;">Value</span>
<div style="position:absolute;left:181px;top:299px;width:16px;height:322px;background:#f0f0f0;"></div>
<div style="position:absolute;left:181px;top:299px;width:16px;height:322px;background:repeating-conic-gradient(#fff 0 25%,#f0f0f0 0 50%) 0 0/2px 2px;"></div>
<div style="position:absolute;left:181px;top:299px;width:16px;height:17px;background:#f0f0f0;border:1px solid;border-color:#fff #696969 #696969 #fff;box-shadow:inset -1px -1px 0 #a0a0a0;"></div>
<svg style="position:absolute;left:186px;top:305px;overflow:visible" width="7" height="4" viewBox="0 0 7 4"><path d="M0 4h7l-3.500-4z" fill="#000"/></svg>
<div style="position:absolute;left:181px;top:316px;width:16px;height:225px;background:#f0f0f0;border:1px solid;border-color:#fff #696969 #696969 #fff;box-shadow:inset -1px -1px 0 #a0a0a0;"></div>
<div style="position:absolute;left:181px;top:604px;width:16px;height:17px;background:#f0f0f0;border:1px solid;border-color:#fff #696969 #696969 #fff;box-shadow:inset -1px -1px 0 #a0a0a0;"></div>
<svg style="position:absolute;left:186px;top:611px;overflow:visible" width="7" height="4" viewBox="0 0 7 4"><path d="M0 0h7l-3.500 4z" fill="#000"/></svg>
<div style="position:absolute;left:50px;top:333px;width:131px;height:238px;background:#0078d7;"></div>
<span class="t" style="left:33px;top:319px;font-size:11px;color:#000;font-family:'Liberation Mono',monospace;font-weight:bold;letter-spacing:0.300px;">Core</span>
<svg style="position:absolute;left:11px;top:322px;overflow:visible" width="9" height="9" viewBox="0 0 9 9"><rect x=".5" y=".5" width="8" height="8" fill="#fff" stroke="#848484"/><path d="M2 4.500h5" stroke="#000"/></svg>
<div style="position:absolute;left:21px;top:326px;width:10px;height:1px;background:repeating-linear-gradient(90deg,#909090 0 1px,transparent 1px 2px);"></div>
<div style="position:absolute;left:15px;top:332px;width:1px;height:288px;background:repeating-linear-gradient(180deg,#909090 0 1px,transparent 1px 2px);"></div>
<div style="position:absolute;left:35px;top:332px;width:1px;height:240px;background:repeating-linear-gradient(180deg,#909090 0 1px,transparent 1px 2px);"></div>
<span class="t" style="left:53px;top:333px;font-size:11px;color:#fff;font-family:'Liberation Mono',monospace;letter-spacing:-0.600px;">R0</span>
<span class="t" style="left:152px;top:333px;font-size:11px;color:#fff;font-family:'Liberation Mono',monospace;letter-spacing:-0.600px;width:29px;overflow:hidden;">0x000</span>
<div style="position:absolute;left:37px;top:339.5px;width:14px;height:1px;background:repeating-linear-gradient(90deg,#909090 0 1px,transparent 1px 2px);"></div>
<span class="t" style="left:53px;top:347px;font-size:11px;color:#fff;font-family:'Liberation Mono',monospace;letter-spacing:-0.600px;">R1</span>
<span class="t" style="left:152px;top:347px;font-size:11px;color:#fff;font-family:'Liberation Mono',monospace;letter-spacing:-0.600px;width:29px;overflow:hidden;">0x000</span>
<div style="position:absolute;left:37px;top:353.5px;width:14px;height:1px;background:repeating-linear-gradient(90deg,#909090 0 1px,transparent 1px 2px);"></div>
<span class="t" style="left:53px;top:361px;font-size:11px;color:#fff;font-family:'Liberation Mono',monospace;letter-spacing:-0.600px;">R2</span>
<span class="t" style="left:152px;top:361px;font-size:11px;color:#fff;font-family:'Liberation Mono',monospace;letter-spacing:-0.600px;width:29px;overflow:hidden;">0x200</span>
<div style="position:absolute;left:37px;top:367.5px;width:14px;height:1px;background:repeating-linear-gradient(90deg,#909090 0 1px,transparent 1px 2px);"></div>
<span class="t" style="left:53px;top:375px;font-size:11px;color:#fff;font-family:'Liberation Mono',monospace;letter-spacing:-0.600px;">R3</span>
<span class="t" style="left:152px;top:375px;font-size:11px;color:#fff;font-family:'Liberation Mono',monospace;letter-spacing:-0.600px;width:29px;overflow:hidden;">0x000</span>
<div style="position:absolute;left:37px;top:381.5px;width:14px;height:1px;background:repeating-linear-gradient(90deg,#909090 0 1px,transparent 1px 2px);"></div>
<span class="t" style="left:53px;top:389px;font-size:11px;color:#fff;font-family:'Liberation Mono',monospace;letter-spacing:-0.600px;">R4</span>
<span class="t" style="left:152px;top:389px;font-size:11px;color:#fff;font-family:'Liberation Mono',monospace;letter-spacing:-0.600px;width:29px;overflow:hidden;">0x200</span>
<div style="position:absolute;left:37px;top:395.5px;width:14px;height:1px;background:repeating-linear-gradient(90deg,#909090 0 1px,transparent 1px 2px);"></div>
<span class="t" style="left:53px;top:403px;font-size:11px;color:#fff;font-family:'Liberation Mono',monospace;letter-spacing:-0.600px;">R5</span>
<span class="t" style="left:152px;top:403px;font-size:11px;color:#fff;font-family:'Liberation Mono',monospace;letter-spacing:-0.600px;width:29px;overflow:hidden;">0x200</span>
<div style="position:absolute;left:37px;top:409.5px;width:14px;height:1px;background:repeating-linear-gradient(90deg,#909090 0 1px,transparent 1px 2px);"></div>
<span class="t" style="left:53px;top:417px;font-size:11px;color:#fff;font-family:'Liberation Mono',monospace;letter-spacing:-0.600px;">R6</span>
<span class="t" style="left:152px;top:417px;font-size:11px;color:#fff;font-family:'Liberation Mono',monospace;letter-spacing:-0.600px;width:29px;overflow:hidden;">0x200</span>
<div style="position:absolute;left:37px;top:423.5px;width:14px;height:1px;background:repeating-linear-gradient(90deg,#909090 0 1px,transparent 1px 2px);"></div>
<span class="t" style="left:53px;top:431px;font-size:11px;color:#fff;font-family:'Liberation Mono',monospace;letter-spacing:-0.600px;">R7</span>
<span class="t" style="left:152px;top:431px;font-size:11px;color:#fff;font-family:'Liberation Mono',monospace;letter-spacing:-0.600px;width:29px;overflow:hidden;">0x200</span>
<div style="position:absolute;left:37px;top:437.5px;width:14px;height:1px;background:repeating-linear-gradient(90deg,#909090 0 1px,transparent 1px 2px);"></div>
<span class="t" style="left:53px;top:445px;font-size:11px;color:#fff;font-family:'Liberation Mono',monospace;letter-spacing:-0.600px;">R8</span>
<span class="t" style="left:152px;top:445px;font-size:11px;color:#fff;font-family:'Liberation Mono',monospace;letter-spacing:-0.600px;width:29px;overflow:hidden;">0xE00</span>
<div style="position:absolute;left:37px;top:451.5px;width:14px;height:1px;background:repeating-linear-gradient(90deg,#909090 0 1px,transparent 1px 2px);"></div>
<span class="t" style="left:53px;top:459px;font-size:11px;color:#fff;font-family:'Liberation Mono',monospace;letter-spacing:-0.600px;">R9</span>
<span class="t" style="left:152px;top:459px;font-size:11px;color:#fff;font-family:'Liberation Mono',monospace;letter-spacing:-0.600px;width:29px;overflow:hidden;">0x100</span>
<div style="position:absolute;left:37px;top:465.5px;width:14px;height:1px;background:repeating-linear-gradient(90deg,#909090 0 1px,transparent 1px 2px);"></div>
<span class="t" style="left:53px;top:473px;font-size:11px;color:#fff;font-family:'Liberation Mono',monospace;letter-spacing:-0.600px;">R10</span>
<span class="t" style="left:152px;top:473px;font-size:11px;color:#fff;font-family:'Liberation Mono',monospace;letter-spacing:-0.600px;width:29px;overflow:hidden;">0x200</span>
<div style="position:absolute;left:37px;top:479.5px;width:14px;height:1px;background:repeating-linear-gradient(90deg,#909090 0 1px,transparent 1px 2px);"></div>
<span class="t" style="left:53px;top:487px;font-size:11px;color:#fff;font-family:'Liberation Mono',monospace;letter-spacing:-0.600px;">R11</span>
<span class="t" style="left:152px;top:487px;font-size:11px;color:#fff;font-family:'Liberation Mono',monospace;letter-spacing:-0.600px;width:29px;overflow:hidden;">0xA5A</span>
<div style="position:absolute;left:37px;top:493.5px;width:14px;height:1px;background:repeating-linear-gradient(90deg,#909090 0 1px,transparent 1px 2px);"></div>
<span class="t" style="left:53px;top:501px;font-size:11px;color:#fff;font-family:'Liberation Mono',monospace;letter-spacing:-0.600px;">R12</span>
<span class="t" style="left:152px;top:501px;font-size:11px;color:#fff;font-family:'Liberation Mono',monospace;letter-spacing:-0.600px;width:29px;overflow:hidden;">0x200</span>
<div style="position:absolute;left:37px;top:507.5px;width:14px;height:1px;background:repeating-linear-gradient(90deg,#909090 0 1px,transparent 1px 2px);"></div>
<span class="t" style="left:53px;top:515px;font-size:11px;color:#fff;font-family:'Liberation Mono',monospace;letter-spacing:-0.600px;">R13 (SP)</span>
<span class="t" style="left:152px;top:515px;font-size:11px;color:#fff;font-family:'Liberation Mono',monospace;letter-spacing:-0.600px;width:29px;overflow:hidden;">0x200</span>
<div style="position:absolute;left:37px;top:521.5px;width:14px;height:1px;background:repeating-linear-gradient(90deg,#909090 0 1px,transparent 1px 2px);"></div>
<span class="t" style="left:53px;top:529px;font-size:11px;color:#fff;font-family:'Liberation Mono',monospace;letter-spacing:-0.600px;">R14 (LR)</span>
<span class="t" style="left:152px;top:529px;font-size:11px;color:#fff;font-family:'Liberation Mono',monospace;letter-spacing:-0.600px;width:29px;overflow:hidden;">0x080</span>
<div style="position:absolute;left:37px;top:535.5px;width:14px;height:1px;background:repeating-linear-gradient(90deg,#909090 0 1px,transparent 1px 2px);"></div>
<span class="t" style="left:53px;top:543px;font-size:11px;color:#fff;font-family:'Liberation Mono',monospace;letter-spacing:-0.600px;">R15 (PC)</span>
<span class="t" style="left:152px;top:543px;font-size:11px;color:#fff;font-family:'Liberation Mono',monospace;letter-spacing:-0.600px;width:29px;overflow:hidden;">0x080</span>
<div style="position:absolute;left:37px;top:549.5px;width:14px;height:1px;background:repeating-linear-gradient(90deg,#909090 0 1px,transparent 1px 2px);"></div>
<span class="t" style="left:53px;top:557px;font-size:11px;color:#fff;font-family:'Liberation Mono',monospace;letter-spacing:-0.600px;">xPSR</span>
<span class="t" style="left:152px;top:557px;font-size:11px;color:#fff;font-family:'Liberation Mono',monospace;letter-spacing:-0.600px;width:29px;overflow:hidden;">0x810</span>
<svg style="position:absolute;left:31px;top:559px;overflow:visible" width="9" height="9" viewBox="0 0 9 9"><rect x=".5" y=".5" width="8" height="8" fill="#fff" stroke="#848484"/><path d="M2 4.500h5" stroke="#000"/><path d="M4.500 2v5" stroke="#000"/></svg>
<div style="position:absolute;left:41px;top:563px;width:10px;height:1px;background:repeating-linear-gradient(90deg,#909090 0 1px,transparent 1px 2px);"></div>
<span class="t" style="left:33px;top:571px;font-size:11px;color:#000;font-family:'Liberation Mono',monospace;letter-spacing:-0.600px;">Banked</span>
<svg style="position:absolute;left:11px;top:573.5px;overflow:visible" width="9" height="9" viewBox="0 0 9 9"><rect x=".5" y=".5" width="8" height="8" fill="#fff" stroke="#848484"/><path d="M2 4.500h5" stroke="#000"/><path d="M4.500 2v5" stroke="#000"/></svg>
<div style="position:absolute;left:21px;top:577.5px;width:10px;height:1px;background:repeating-linear-gradient(90deg,#909090 0 1px,transparent 1px 2px);"></div>
<span class="t" style="left:33px;top:585px;font-size:11px;color:#000;font-family:'Liberation Mono',monospace;letter-spacing:-0.600px;">System</span>
<svg style="position:absolute;left:11px;top:587.5px;overflow:visible" width="9" height="9" viewBox="0 0 9 9"><rect x=".5" y=".5" width="8" height="8" fill="#fff" stroke="#848484"/><path d="M2 4.500h5" stroke="#000"/><path d="M4.500 2v5" stroke="#000"/></svg>
<div style="position:absolute;left:21px;top:591.5px;width:10px;height:1px;background:repeating-linear-gradient(90deg,#909090 0 1px,transparent 1px 2px);"></div>
<span class="t" style="left:33px;top:599px;font-size:11px;color:#000;font-family:'Liberation Mono',monospace;letter-spacing:-0.600px;">Internal</span>
<svg style="position:absolute;left:11px;top:601.5px;overflow:visible" width="9" height="9" viewBox="0 0 9 9"><rect x=".5" y=".5" width="8" height="8" fill="#fff" stroke="#848484"/><path d="M2 4.500h5" stroke="#000"/></svg>
<div style="position:absolute;left:21px;top:605.5px;width:10px;height:1px;background:repeating-linear-gradient(90deg,#909090 0 1px,transparent 1px 2px);"></div>
<div style="position:absolute;left:6px;top:613px;width:175px;height:7px;overflow:hidden;"><span class="t" style="left:47px;top:-1px;font-size:11px;font-family:'Liberation Mono',monospace;letter-spacing:-0.6px;font-weight:bold">Mode</span><span class="t" style="left:147px;top:-1px;font-size:11px;font-family:'Liberation Mono',monospace;letter-spacing:-0.6px">Threa</span></div>
<div style="position:absolute;left:35px;top:612px;width:1px;height:8px;background:repeating-linear-gradient(180deg,#909090 0 1px,transparent 1px 2px);"></div>
<div style="position:absolute;left:37px;top:619px;width:14px;height:1px;background:repeating-linear-gradient(90deg,#909090 0 1px,transparent 1px 2px);"></div>
<div style="position:absolute;left:2px;top:623px;width:67px;height:1px;background:#000;"></div>
<div style="position:absolute;left:145px;top:623px;width:57px;height:1px;background:#000;"></div>
<div style="position:absolute;left:144px;top:623px;width:1px;height:21px;background:#000;"></div>
<div style="position:absolute;left:145px;top:624px;width:57px;height:20px;background:#fafafa;"></div>
<div style="position:absolute;left:69px;top:622px;width:75px;height:22px;background:#f4f4f4;"></div>
<div style="position:absolute;left:68px;top:627px;width:1px;height:15px;background:#a0a0a0;"></div>
<svg style="position:absolute;left:9px;top:627px;overflow:visible" width="15" height="14" viewBox="0 0 15 14"><rect x=".5" y=".5" width="14" height="13" fill="#ffffe8" stroke="#4a5a98"/><rect x="1" y="1" width="13" height="3" fill="#6a8ad8"/><path d="M3 6.500h2M3 8.500h2M3 10.500h2" stroke="#a8a800" stroke-width="1.200"/><path d="M6.500 6.500h6M6.500 8.500h6M6.500 10.500h6" stroke="#808020" stroke-width="1.200"/></svg>
<span class="t" style="left:26.6px;top:627px;font-size:11.5px;color:#9a9a9a;letter-spacing:-0.200px;">Project</span>
<svg style="position:absolute;left:75px;top:628px;overflow:visible" width="14" height="12" viewBox="0 0 14 12"><rect x=".5" y=".5" width="13" height="2.500" fill="#dfe3ee" stroke="#586078"/><rect x=".5" y="4.500" width="13" height="2.500" fill="#dfe3ee" stroke="#586078"/><rect x=".5" y="8.500" width="13" height="2.500" fill="#dfe3ee" stroke="#586078"/></svg>
<span class="t" style="left:92px;top:627px;font-size:11.5px;color:#000;letter-spacing:-0.342px;">Registers</span>
<div style="position:absolute;left:206px;top:274px;width:1253px;height:18px;background:linear-gradient(#bbcadb,#d6e3f1);"></div>
<span class="t" style="left:210.6px;top:276px;font-size:11px;color:#000;letter-spacing:-0.033px;">Disassembly</span>
<svg style="position:absolute;left:1426px;top:280px;overflow:visible" width="8" height="9" viewBox="0 0 8 9"><path d="M1.500 5.500V.5h4v5" stroke="#000" stroke-width="1" fill="none"/><path d="M5 0v5.500" stroke="#000" stroke-width="2"/><path d="M0 5.500h7.500" stroke="#000" stroke-width="1"/><path d="M3.500 6v2.500" stroke="#000" stroke-width="1"/></svg>
<div style="position:absolute;left:1442px;top:278px;width:12px;height:12px;background:#c9504c;"></div>
<svg style="position:absolute;left:1445px;top:281px;overflow:visible" width="6" height="6" viewBox="0 0 6 6"><path d="M.3 .3l5.400 5.400m0-5.400l-5.400 5.400" stroke="#fff" stroke-width="1.900"/></svg>
<div style="position:absolute;left:206px;top:294px;width:1251px;height:147px;background:#fff;border-left:1px solid #696969;border-top:1px solid #696969;"></div>
<div style="position:absolute;left:207px;top:295px;width:1px;height:146px;background:#8c8c8c;"></div>
<div style="position:absolute;left:207px;top:295px;width:1250px;height:1px;background:#8c8c8c;"></div>
<div style="position:absolute;left:208px;top:296px;width:15px;height:128px;background:#c0c0c0;"></div>
<div style="position:absolute;left:208px;top:328px;width:15px;height:16px;background:repeating-conic-gradient(#fff 0 25%,#c8c8c8 0 50%) 0 0/2px 2px;"></div>
<div style="position:absolute;left:223px;top:296px;width:1217px;height:16px;background:#ffff00;"></div>
<svg style="position:absolute;left:208px;top:297px;overflow:visible" width="15" height="15" viewBox="0 0 15 15"><path d="M1.500 5h6.500v-3.500l6 6-6 6v-3.500h-6.500z" fill="#ffff00" stroke="#000" stroke-width="1.200"/></svg>
<span class="t" style="left:224px;top:297px;font-size:12.5px;color:#000;font-family:'Liberation Mono',monospace;letter-spacing:0.500px;">0x08001F58 2802      CMP           r0,#0x02</span>
<span class="t" style="left:224px;top:313px;font-size:12.5px;color:#000;font-family:'Liberation Mono',monospace;letter-spacing:0.500px;">0x08001F5A D3E3      BCC           0x08001F24</span>
<span class="t" style="left:224px;top:329px;font-size:12.5px;color:#8b1a1a;font-family:'Liberation Mono',monospace;letter-spacing:0.500px;">  3469:                 taskYIELD(); </span>
<span class="t" style="left:224px;top:345px;font-size:12.5px;color:#000;font-family:'Liberation Mono',monospace;letter-spacing:0.500px;">0x08001F5C F8C89000  STR           r9,[r8,#0x00]</span>
<span class="t" style="left:224px;top:361px;font-size:12.5px;color:#000;font-family:'Liberation Mono',monospace;letter-spacing:0.500px;">0x08001F60 F3BF8F4F  DSB.W     </span>
<span class="t" style="left:224px;top:377px;font-size:12.5px;color:#000;font-family:'Liberation Mono',monospace;letter-spacing:0.500px;">0x08001F64 F3BF8F6F  ISB.W     </span>
<span class="t" style="left:224px;top:393px;font-size:12.5px;color:#000;font-family:'Liberation Mono',monospace;letter-spacing:0.500px;">0x08001F68 E7DC      B             0x08001F24</span>
<span class="t" style="left:224px;top:409px;font-size:12.5px;color:#000;font-family:'Liberation Mono',monospace;letter-spacing:0.500px;">0x08001F6A 0000      MOVS          r0,r0</span>
<div style="position:absolute;left:1440px;top:296px;width:17px;height:128px;background:#f0f0f0;"></div>
<svg style="position:absolute;left:1444px;top:301px;overflow:visible" width="8" height="6" viewBox="0 0 8 6"><path d="M.5 5l3.500-3.500 3.500 3.500" fill="none" stroke="#505050" stroke-width="1.700"/></svg>
<svg style="position:absolute;left:1444px;top:411px;overflow:visible" width="8" height="6" viewBox="0 0 8 6"><path d="M.5 1.500l3.500 3.500 3.500-3.500" fill="none" stroke="#505050" stroke-width="1.700"/></svg>
<div style="position:absolute;left:1441px;top:351px;width:15px;height:17px;background:#cdcdcd;"></div>
<div style="position:absolute;left:208px;top:424px;width:1249px;height:17px;background:#f0f0f0;"></div>
<svg style="position:absolute;left:213px;top:428px;overflow:visible" width="6" height="8" viewBox="0 0 6 8"><path d="M5 .5l-3.500 3.500 3.500 3.500" fill="none" stroke="#505050" stroke-width="1.700"/></svg>
<svg style="position:absolute;left:1428px;top:428px;overflow:visible" width="6" height="8" viewBox="0 0 6 8"><path d="M1.500 .5l3.500 3.500-3.500 3.500" fill="none" stroke="#505050" stroke-width="1.700"/></svg>
<div style="position:absolute;left:1405px;top:424px;width:17px;height:15px;background:#cdcdcd;"></div>
<div style="position:absolute;left:206px;top:446px;width:1251px;height:24px;background:#f8f8f8;border-top:1px solid #b4b4b4;border-left:1px solid #b4b4b4;"></div>
<svg style="position:absolute;left:206px;top:447px;overflow:visible" width="1253" height="24" viewBox="0 0 1253 24"><path d="M5 23L25 3Q27 2 30 2H119Q122 2 122 5V23z" fill="#c6d4f0" stroke="#a8b4c8" stroke-width="1"/><path d="M122 23V8Q123 2 130 2H201Q204 2 204 5V23z" fill="#fcd56e" stroke="#b0b0b0" stroke-width="1"/><path d="M204 23V8Q205 2 212 2H325Q328 2 328 5V23z" fill="#b5c99c" stroke="#b0b0b0" stroke-width="1"/><path d="M328 23V8Q329 2 336 2H476Q479 2 479 5V23z" fill="#f09a9a" stroke="#b0b0b0" stroke-width="1"/><path d="M479 23V8Q480 2 487 2H553Q556 2 556 5V23z" fill="#c4a8e2" stroke="#b0b0b0" stroke-width="1"/><path d="M556 23V8Q557 2 564 2H680Q683 2 683 5V23z" fill="#9ec5b7" stroke="#b0b0b0" stroke-width="1"/><path d="M683 23V8Q684 2 691 2H762Q765 2 765 5V23z" fill="#f6b27a" stroke="#b0b0b0" stroke-width="1"/><path d="M765 23V8Q766 2 773 2H918Q921 2 921 5V23z" fill="#dcaac6" stroke="#b0b0b0" stroke-width="1"/><path d="M907 23L927 3Q929 2 932 2H994Q997 2 997 5V23z" fill="#aac5dd" stroke="#98a8b8" stroke-width="1"/><path d="M997 23V8Q998 2 1005 2H1152Q1155 2 1155 5V23z" fill="#b6a6c6" stroke="#b0b0b0" stroke-width="1"/></svg>
<svg style="position:absolute;left:235px;top:452px;overflow:visible" width="14" height="16" viewBox="0 0 14 16"><path d="M.5 .5h7.500l3 3v10h-10.500z" fill="#fff" stroke="#7a88b0"/><path d="M8 .5v3h3" fill="#e4e8f8" stroke="#7a88b0"/><path d="M.5 13.500h10.500v-10" fill="none" stroke="#3a4a78"/></svg>
<span class="t" style="left:258.5px;top:451px;font-size:11.5px;color:#000;letter-spacing:-0.044px;">Abstract.txt</span>
<svg style="position:absolute;left:338px;top:452px;overflow:visible" width="14" height="16" viewBox="0 0 14 16"><path d="M.5 .5h7.500l3 3v10h-10.500z" fill="#fff" stroke="#8a96b8"/><path d="M8 .5v3h3" fill="#e4e8f8" stroke="#7a88b0"/><path d="M.5 13.500h10.500v-10" fill="none" stroke="#4a5a88"/><rect x="2" y="4.0" width="1" height="1" fill="#b8bcc8"/><rect x="4" y="4.0" width="1" height="1" fill="#b8bcc8"/><rect x="6" y="4.0" width="1" height="1" fill="#b8bcc8"/><rect x="8" y="4.0" width="1" height="1" fill="#b8bcc8"/><rect x="3" y="5.5" width="1" height="1" fill="#b8bcc8"/><rect x="5" y="5.5" width="1" height="1" fill="#b8bcc8"/><rect x="7" y="5.5" width="1" height="1" fill="#b8bcc8"/><rect x="9" y="5.5" width="1" height="1" fill="#b8bcc8"/><rect x="2" y="7.0" width="1" height="1" fill="#b8bcc8"/><rect x="4" y="7.0" width="1" height="1" fill="#b8bcc8"/><rect x="6" y="7.0" width="1" height="1" fill="#b8bcc8"/><rect x="8" y="7.0" width="1" height="1" fill="#b8bcc8"/><rect x="3" y="8.5" width="1" height="1" fill="#b8bcc8"/><rect x="5" y="8.5" width="1" height="1" fill="#b8bcc8"/><rect x="7" y="8.5" width="1" height="1" fill="#b8bcc8"/><rect x="9" y="8.5" width="1" height="1" fill="#b8bcc8"/><rect x="2" y="10.0" width="1" height="1" fill="#b8bcc8"/><rect x="4" y="10.0" width="1" height="1" fill="#b8bcc8"/><rect x="6" y="10.0" width="1" height="1" fill="#b8bcc8"/><rect x="8" y="10.0" width="1" height="1" fill="#b8bcc8"/><rect x="3" y="11.5" width="1" height="1" fill="#b8bcc8"/><rect x="5" y="11.5" width="1" height="1" fill="#b8bcc8"/><rect x="7" y="11.5" width="1" height="1" fill="#b8bcc8"/><rect x="2" y="13.0" width="1" height="1" fill="#b8bcc8"/><rect x="4" y="13.0" width="1" height="1" fill="#b8bcc8"/><rect x="6" y="13.0" width="1" height="1" fill="#b8bcc8"/></svg>
<span class="t" style="left:360px;top:451px;font-size:11.5px;color:#000;letter-spacing:-0.098px;">Blinky.c</span>
<svg style="position:absolute;left:419px;top:450px;overflow:visible" width="14" height="16" viewBox="0 0 14 16"><rect x=".5" y="2.500" width="11" height="12" fill="#fff" stroke="#c4cce0"/><path d="M.5 14.500h11v-12" fill="none" stroke="#44546c" stroke-width="1.200"/><rect x="2" y="6.0" width="1" height="1" fill="#b8bcc8"/><rect x="4" y="6.0" width="1" height="1" fill="#b8bcc8"/><rect x="6" y="6.0" width="1" height="1" fill="#b8bcc8"/><rect x="8" y="6.0" width="1" height="1" fill="#b8bcc8"/><rect x="3" y="7.5" width="1" height="1" fill="#b8bcc8"/><rect x="5" y="7.5" width="1" height="1" fill="#b8bcc8"/><rect x="7" y="7.5" width="1" height="1" fill="#b8bcc8"/><rect x="9" y="7.5" width="1" height="1" fill="#b8bcc8"/><rect x="2" y="7.0" width="1" height="1" fill="#b8bcc8"/><rect x="4" y="7.0" width="1" height="1" fill="#b8bcc8"/><rect x="6" y="7.0" width="1" height="1" fill="#b8bcc8"/><rect x="8" y="7.0" width="1" height="1" fill="#b8bcc8"/><rect x="3" y="8.5" width="1" height="1" fill="#b8bcc8"/><rect x="5" y="8.5" width="1" height="1" fill="#b8bcc8"/><rect x="7" y="8.5" width="1" height="1" fill="#b8bcc8"/><rect x="9" y="8.5" width="1" height="1" fill="#b8bcc8"/><rect x="2" y="10.0" width="1" height="1" fill="#b8bcc8"/><rect x="4" y="10.0" width="1" height="1" fill="#b8bcc8"/><rect x="6" y="10.0" width="1" height="1" fill="#b8bcc8"/><rect x="8" y="10.0" width="1" height="1" fill="#b8bcc8"/><rect x="3" y="11.5" width="1" height="1" fill="#b8bcc8"/><rect x="5" y="11.5" width="1" height="1" fill="#b8bcc8"/><rect x="7" y="11.5" width="1" height="1" fill="#b8bcc8"/><rect x="2" y="13.0" width="1" height="1" fill="#b8bcc8"/><rect x="4" y="13.0" width="1" height="1" fill="#b8bcc8"/><rect x="6" y="13.0" width="1" height="1" fill="#b8bcc8"/><path d="M6 1.500h7.500v2h-1.500v1.500h-1.500v-1.500h-1v1.500h-1.500v-1.500h-2z" fill="#ffff00" stroke="#000" stroke-width="1"/><circle cx="4.500" cy="3.500" r="2.900" fill="#ffff00" stroke="#000" stroke-width="1.200"/><circle cx="4.300" cy="3.500" r=".9" fill="#000"/></svg>
<span class="t" style="left:441px;top:451px;font-size:11.5px;color:#000;letter-spacing:-0.201px;">EventRecorder.c</span>
<svg style="position:absolute;left:545px;top:452px;overflow:visible" width="14" height="16" viewBox="0 0 14 16"><path d="M.5 .5h7.500l3 3v10h-10.500z" fill="#fff" stroke="#7a88b0"/><path d="M8 .5v3h3" fill="#e4e8f8" stroke="#7a88b0"/><path d="M.5 13.500h10.500v-10" fill="none" stroke="#3a4a78"/></svg>
<span class="t" style="left:566px;top:451px;font-size:11.5px;color:#000;letter-spacing:-0.137px;">EventRecorderConf.h</span>
<svg style="position:absolute;left:696px;top:452px;overflow:visible" width="14" height="16" viewBox="0 0 14 16"><path d="M.5 .5h7.500l3 3v10h-10.500z" fill="#fff" stroke="#8a96b8"/><path d="M8 .5v3h3" fill="#e4e8f8" stroke="#7a88b0"/><path d="M.5 13.500h10.500v-10" fill="none" stroke="#4a5a88"/><rect x="2" y="4.0" width="1" height="1" fill="#b8bcc8"/><rect x="4" y="4.0" width="1" height="1" fill="#b8bcc8"/><rect x="6" y="4.0" width="1" height="1" fill="#b8bcc8"/><rect x="8" y="4.0" width="1" height="1" fill="#b8bcc8"/><rect x="3" y="5.5" width="1" height="1" fill="#b8bcc8"/><rect x="5" y="5.5" width="1" height="1" fill="#b8bcc8"/><rect x="7" y="5.5" width="1" height="1" fill="#b8bcc8"/><rect x="9" y="5.5" width="1" height="1" fill="#b8bcc8"/><rect x="2" y="7.0" width="1" height="1" fill="#b8bcc8"/><rect x="4" y="7.0" width="1" height="1" fill="#b8bcc8"/><rect x="6" y="7.0" width="1" height="1" fill="#b8bcc8"/><rect x="8" y="7.0" width="1" height="1" fill="#b8bcc8"/><rect x="3" y="8.5" width="1" height="1" fill="#b8bcc8"/><rect x="5" y="8.5" width="1" height="1" fill="#b8bcc8"/><rect x="7" y="8.5" width="1" height="1" fill="#b8bcc8"/><rect x="9" y="8.5" width="1" height="1" fill="#b8bcc8"/><rect x="2" y="10.0" width="1" height="1" fill="#b8bcc8"/><rect x="4" y="10.0" width="1" height="1" fill="#b8bcc8"/><rect x="6" y="10.0" width="1" height="1" fill="#b8bcc8"/><rect x="8" y="10.0" width="1" height="1" fill="#b8bcc8"/><rect x="3" y="11.5" width="1" height="1" fill="#b8bcc8"/><rect x="5" y="11.5" width="1" height="1" fill="#b8bcc8"/><rect x="7" y="11.5" width="1" height="1" fill="#b8bcc8"/><rect x="2" y="13.0" width="1" height="1" fill="#b8bcc8"/><rect x="4" y="13.0" width="1" height="1" fill="#b8bcc8"/><rect x="6" y="13.0" width="1" height="1" fill="#b8bcc8"/></svg>
<span class="t" style="left:718px;top:451px;font-size:11.5px;color:#000;letter-spacing:-0.146px;">main.c</span>
<svg style="position:absolute;left:771px;top:450px;overflow:visible" width="14" height="16" viewBox="0 0 14 16"><rect x=".5" y="2.500" width="11" height="12" fill="#fff" stroke="#c4cce0"/><path d="M.5 14.500h11v-12" fill="none" stroke="#44546c" stroke-width="1.200"/><rect x="2" y="6.0" width="1" height="1" fill="#b8bcc8"/><rect x="4" y="6.0" width="1" height="1" fill="#b8bcc8"/><rect x="6" y="6.0" width="1" height="1" fill="#b8bcc8"/><rect x="8" y="6.0" width="1" height="1" fill="#b8bcc8"/><rect x="3" y="7.5" width="1" height="1" fill="#b8bcc8"/><rect x="5" y="7.5" width="1" height="1" fill="#b8bcc8"/><rect x="7" y="7.5" width="1" height="1" fill="#b8bcc8"/><rect x="9" y="7.5" width="1" height="1" fill="#b8bcc8"/><rect x="2" y="7.0" width="1" height="1" fill="#b8bcc8"/><rect x="4" y="7.0" width="1" height="1" fill="#b8bcc8"/><rect x="6" y="7.0" width="1" height="1" fill="#b8bcc8"/><rect x="8" y="7.0" width="1" height="1" fill="#b8bcc8"/><rect x="3" y="8.5" width="1" height="1" fill="#b8bcc8"/><rect x="5" y="8.5" width="1" height="1" fill="#b8bcc8"/><rect x="7" y="8.5" width="1" height="1" fill="#b8bcc8"/><rect x="9" y="8.5" width="1" height="1" fill="#b8bcc8"/><rect x="2" y="10.0" width="1" height="1" fill="#b8bcc8"/><rect x="4" y="10.0" width="1" height="1" fill="#b8bcc8"/><rect x="6" y="10.0" width="1" height="1" fill="#b8bcc8"/><rect x="8" y="10.0" width="1" height="1" fill="#b8bcc8"/><rect x="3" y="11.5" width="1" height="1" fill="#b8bcc8"/><rect x="5" y="11.5" width="1" height="1" fill="#b8bcc8"/><rect x="7" y="11.5" width="1" height="1" fill="#b8bcc8"/><rect x="2" y="13.0" width="1" height="1" fill="#b8bcc8"/><rect x="4" y="13.0" width="1" height="1" fill="#b8bcc8"/><rect x="6" y="13.0" width="1" height="1" fill="#b8bcc8"/><path d="M6 1.500h7.500v2h-1.500v1.500h-1.500v-1.500h-1v1.500h-1.500v-1.500h-2z" fill="#ffff00" stroke="#000" stroke-width="1"/><circle cx="4.500" cy="3.500" r="2.900" fill="#ffff00" stroke="#000" stroke-width="1.200"/><circle cx="4.300" cy="3.500" r=".9" fill="#000"/></svg>
<span class="t" style="left:794px;top:451px;font-size:11.5px;color:#000;letter-spacing:-0.111px;">EventRecorder.h</span>
<svg style="position:absolute;left:898px;top:450px;overflow:visible" width="14" height="16" viewBox="0 0 14 16"><rect x=".5" y="2.500" width="11" height="12" fill="#fff" stroke="#c4cce0"/><path d="M.5 14.500h11v-12" fill="none" stroke="#44546c" stroke-width="1.200"/><rect x="2" y="6.0" width="1" height="1" fill="#b8bcc8"/><rect x="4" y="6.0" width="1" height="1" fill="#b8bcc8"/><rect x="6" y="6.0" width="1" height="1" fill="#b8bcc8"/><rect x="8" y="6.0" width="1" height="1" fill="#b8bcc8"/><rect x="3" y="7.5" width="1" height="1" fill="#b8bcc8"/><rect x="5" y="7.5" width="1" height="1" fill="#b8bcc8"/><rect x="7" y="7.5" width="1" height="1" fill="#b8bcc8"/><rect x="9" y="7.5" width="1" height="1" fill="#b8bcc8"/><rect x="2" y="7.0" width="1" height="1" fill="#b8bcc8"/><rect x="4" y="7.0" width="1" height="1" fill="#b8bcc8"/><rect x="6" y="7.0" width="1" height="1" fill="#b8bcc8"/><rect x="8" y="7.0" width="1" height="1" fill="#b8bcc8"/><rect x="3" y="8.5" width="1" height="1" fill="#b8bcc8"/><rect x="5" y="8.5" width="1" height="1" fill="#b8bcc8"/><rect x="7" y="8.5" width="1" height="1" fill="#b8bcc8"/><rect x="9" y="8.5" width="1" height="1" fill="#b8bcc8"/><rect x="2" y="10.0" width="1" height="1" fill="#b8bcc8"/><rect x="4" y="10.0" width="1" height="1" fill="#b8bcc8"/><rect x="6" y="10.0" width="1" height="1" fill="#b8bcc8"/><rect x="8" y="10.0" width="1" height="1" fill="#b8bcc8"/><rect x="3" y="11.5" width="1" height="1" fill="#b8bcc8"/><rect x="5" y="11.5" width="1" height="1" fill="#b8bcc8"/><rect x="7" y="11.5" width="1" height="1" fill="#b8bcc8"/><rect x="2" y="13.0" width="1" height="1" fill="#b8bcc8"/><rect x="4" y="13.0" width="1" height="1" fill="#b8bcc8"/><rect x="6" y="13.0" width="1" height="1" fill="#b8bcc8"/><path d="M6 1.500h7.500v2h-1.500v1.500h-1.500v-1.500h-1v1.500h-1.500v-1.500h-2z" fill="#ffff00" stroke="#000" stroke-width="1"/><circle cx="4.500" cy="3.500" r="2.900" fill="#ffff00" stroke="#000" stroke-width="1.200"/><circle cx="4.300" cy="3.500" r=".9" fill="#000"/></svg>
<span class="t" style="left:921px;top:451px;font-size:11.5px;color:#000;letter-spacing:-0.031px;">timers.c</span>
<svg style="position:absolute;left:980px;top:452px;overflow:visible" width="14" height="16" viewBox="0 0 14 16"><path d="M.5 .5h7.500l3 3v10h-10.500z" fill="#fff" stroke="#101010"/><path d="M8 .5v3h3" fill="#fff" stroke="#101010"/></svg>
<span class="t" style="left:1004px;top:451px;font-size:11.5px;color:#000;letter-spacing:-0.176px;">startup_stm32f746xx.s</span>
<svg style="position:absolute;left:1137px;top:450px;overflow:visible" width="14" height="16" viewBox="0 0 14 16"><rect x=".5" y="2.500" width="11" height="12" fill="#fff" stroke="#c4cce0"/><path d="M.5 14.500h11v-12" fill="none" stroke="#44546c" stroke-width="1.200"/><rect x="2" y="6.0" width="1" height="1" fill="#b8bcc8"/><rect x="4" y="6.0" width="1" height="1" fill="#b8bcc8"/><rect x="6" y="6.0" width="1" height="1" fill="#b8bcc8"/><rect x="8" y="6.0" width="1" height="1" fill="#b8bcc8"/><rect x="3" y="7.5" width="1" height="1" fill="#b8bcc8"/><rect x="5" y="7.5" width="1" height="1" fill="#b8bcc8"/><rect x="7" y="7.5" width="1" height="1" fill="#b8bcc8"/><rect x="9" y="7.5" width="1" height="1" fill="#b8bcc8"/><rect x="2" y="7.0" width="1" height="1" fill="#b8bcc8"/><rect x="4" y="7.0" width="1" height="1" fill="#b8bcc8"/><rect x="6" y="7.0" width="1" height="1" fill="#b8bcc8"/><rect x="8" y="7.0" width="1" height="1" fill="#b8bcc8"/><rect x="3" y="8.5" width="1" height="1" fill="#b8bcc8"/><rect x="5" y="8.5" width="1" height="1" fill="#b8bcc8"/><rect x="7" y="8.5" width="1" height="1" fill="#b8bcc8"/><rect x="9" y="8.5" width="1" height="1" fill="#b8bcc8"/><rect x="2" y="10.0" width="1" height="1" fill="#b8bcc8"/><rect x="4" y="10.0" width="1" height="1" fill="#b8bcc8"/><rect x="6" y="10.0" width="1" height="1" fill="#b8bcc8"/><rect x="8" y="10.0" width="1" height="1" fill="#b8bcc8"/><rect x="3" y="11.5" width="1" height="1" fill="#b8bcc8"/><rect x="5" y="11.5" width="1" height="1" fill="#b8bcc8"/><rect x="7" y="11.5" width="1" height="1" fill="#b8bcc8"/><rect x="2" y="13.0" width="1" height="1" fill="#b8bcc8"/><rect x="4" y="13.0" width="1" height="1" fill="#b8bcc8"/><rect x="6" y="13.0" width="1" height="1" fill="#b8bcc8"/><path d="M6 1.500h7.500v2h-1.500v1.500h-1.500v-1.500h-1v1.500h-1.500v-1.500h-2z" fill="#ffff00" stroke="#000" stroke-width="1"/><circle cx="4.500" cy="3.500" r="2.900" fill="#ffff00" stroke="#000" stroke-width="1.200"/><circle cx="4.300" cy="3.500" r=".9" fill="#000"/></svg>
<span class="t" style="left:1160px;top:451px;font-size:11.5px;color:#000;font-weight:bold;letter-spacing:-0.574px;">tasks.c</span>
<div style="position:absolute;left:1156px;top:467px;width:42px;height:2px;background:#000;"></div>
<svg style="position:absolute;left:1214px;top:452px;overflow:visible" width="14" height="16" viewBox="0 0 14 16"><path d="M.5 .5h7.500l3 3v10h-10.500z" fill="#fff" stroke="#8a96b8"/><path d="M8 .5v3h3" fill="#e4e8f8" stroke="#7a88b0"/><path d="M.5 13.500h10.500v-10" fill="none" stroke="#4a5a88"/><rect x="2" y="4.0" width="1" height="1" fill="#b8bcc8"/><rect x="4" y="4.0" width="1" height="1" fill="#b8bcc8"/><rect x="6" y="4.0" width="1" height="1" fill="#b8bcc8"/><rect x="8" y="4.0" width="1" height="1" fill="#b8bcc8"/><rect x="3" y="5.5" width="1" height="1" fill="#b8bcc8"/><rect x="5" y="5.5" width="1" height="1" fill="#b8bcc8"/><rect x="7" y="5.5" width="1" height="1" fill="#b8bcc8"/><rect x="9" y="5.5" width="1" height="1" fill="#b8bcc8"/><rect x="2" y="7.0" width="1" height="1" fill="#b8bcc8"/><rect x="4" y="7.0" width="1" height="1" fill="#b8bcc8"/><rect x="6" y="7.0" width="1" height="1" fill="#b8bcc8"/><rect x="8" y="7.0" width="1" height="1" fill="#b8bcc8"/><rect x="3" y="8.5" width="1" height="1" fill="#b8bcc8"/><rect x="5" y="8.5" width="1" height="1" fill="#b8bcc8"/><rect x="7" y="8.5" width="1" height="1" fill="#b8bcc8"/><rect x="9" y="8.5" width="1" height="1" fill="#b8bcc8"/><rect x="2" y="10.0" width="1" height="1" fill="#b8bcc8"/><rect x="4" y="10.0" width="1" height="1" fill="#b8bcc8"/><rect x="6" y="10.0" width="1" height="1" fill="#b8bcc8"/><rect x="8" y="10.0" width="1" height="1" fill="#b8bcc8"/><rect x="3" y="11.5" width="1" height="1" fill="#b8bcc8"/><rect x="5" y="11.5" width="1" height="1" fill="#b8bcc8"/><rect x="7" y="11.5" width="1" height="1" fill="#b8bcc8"/><rect x="2" y="13.0" width="1" height="1" fill="#b8bcc8"/><rect x="4" y="13.0" width="1" height="1" fill="#b8bcc8"/><rect x="6" y="13.0" width="1" height="1" fill="#b8bcc8"/></svg>
<span class="t" style="left:1237px;top:451px;font-size:11.5px;color:#000;letter-spacing:-0.176px;">startup_stm32f746xx.s</span>
<svg style="position:absolute;left:1420px;top:456px;overflow:visible" width="10" height="5" viewBox="0 0 10 5"><path d="M0 0h10l-5 5z" fill="#000"/></svg>
<svg style="position:absolute;left:1440px;top:453px;overflow:visible" width="9" height="9" viewBox="0 0 9 9"><path d="M.5 .5l8 8m0-8l-8 8" stroke="#000" stroke-width="1.500"/></svg>
<div style="position:absolute;left:206px;top:469px;width:1249px;height:1px;background:#b4b4b4;"></div>
<div style="position:absolute;left:207px;top:470px;width:1251px;height:172px;background:#a7c3dd;"></div>
<div style="position:absolute;left:207px;top:642px;width:1250px;height:2px;background:#f6f6f6;"></div>
<div style="position:absolute;left:209px;top:471px;width:1246px;height:171px;background:#fff;border-left:1px solid #a0a0a0;border-top:1px solid #a0a0a0;"></div>
<div style="position:absolute;left:210px;top:472px;width:1244px;height:170px;border-left:1px solid #696969;border-top:1px solid #696969;"></div>
<div style="position:absolute;left:211px;top:473px;width:57px;height:152px;background:#e8e8e8;"></div>
<div style="position:absolute;left:268px;top:473px;width:7px;height:152px;background:repeating-conic-gradient(#fff 0 25%,#e0e0e0 0 50%) 0 0/2px 2px;"></div>
<div style="position:absolute;left:276px;top:473px;width:6px;height:152px;background:repeating-conic-gradient(#fff 0 25%,#f0f0f0 0 50%) 0 0/2px 2px;"></div>
<div style="position:absolute;left:211px;top:473px;width:1226px;height:152px;overflow:hidden;"><div style="position:absolute;left:0;top:1px"><span class="e" style="left:26px;top:0px">3464</span><span class="e" style="left:72px;top:0px;color:#008000">             * the list, and an occasional incorrect value will not matter.  If</span><span class="e" style="left:26px;top:13px">3465</span><span class="e" style="left:72px;top:13px;color:#008000">             * the ready list at the idle priority contains more than one task</span><span class="e" style="left:26px;top:26px">3466</span><span class="e" style="left:72px;top:26px;color:#008000">             * then a task other than the idle task is ready to execute. */</span><span class="e" style="left:26px;top:39px">3467</span><span class="e" style="left:72px;top:39px">            <span style="color:#0000ff">if</span>( listCURRENT_LIST_LENGTH( &amp;( pxReadyTasksLists[ tskIDLE_PRIORITY ] ) ) &gt; ( UBaseType_t ) <span style="color:#008080">1</span> )</span><span class="e" style="left:26px;top:52px">3468</span><span class="e" style="left:72px;top:52px">            {</span><span class="e" style="left:26px;top:65px">3469</span><span class="e" style="left:72px;top:65px">                taskYIELD();</span><span class="e" style="left:26px;top:78px">3470</span><span class="e" style="left:72px;top:78px">            }</span><span class="e" style="left:26px;top:91px">3471</span><span class="e" style="left:72px;top:91px;color:#0000ff">            else</span><span class="e" style="left:26px;top:104px">3472</span><span class="e" style="left:72px;top:104px">            {</span><span class="e" style="left:26px;top:117px">3473</span><span class="e" style="left:72px;top:117px">                mtCOVERAGE_TEST_MARKER();</span><span class="e" style="left:26px;top:130px">3474</span><span class="e" style="left:72px;top:130px">            }</span><span class="e" style="left:26px;top:143px">3475</span><span class="e" style="left:72px;top:143px">        }</span></div></div>
<div style="position:absolute;left:275px;top:473px;width:1px;height:152px;background:#808080;"></div>
<svg style="position:absolute;left:271px;top:527px;overflow:visible" width="9" height="9" viewBox="0 0 9 9"><rect x=".5" y=".5" width="8" height="8" fill="#fff" stroke="#808080"/><path d="M2 4.500h5" stroke="#404040"/></svg>
<svg style="position:absolute;left:271px;top:579px;overflow:visible" width="9" height="9" viewBox="0 0 9 9"><rect x=".5" y=".5" width="8" height="8" fill="#fff" stroke="#808080"/><path d="M2 4.500h5" stroke="#404040"/></svg>
<div style="position:absolute;left:276px;top:505px;width:5px;height:1px;background:#808080;"></div>
<div style="position:absolute;left:276px;top:557px;width:5px;height:1px;background:#808080;"></div>
<div style="position:absolute;left:276px;top:609px;width:5px;height:1px;background:#808080;"></div>
<div style="position:absolute;left:276px;top:622px;width:5px;height:1px;background:#808080;"></div>
<div style="position:absolute;left:211px;top:512px;width:20px;height:13px;background:#c4c4c4;"></div>
<div style="position:absolute;left:211px;top:538px;width:20px;height:13px;background:#c4c4c4;"></div>
<svg style="position:absolute;left:213px;top:510px;overflow:visible" width="18" height="15" viewBox="0 0 18 15"><path d="M.5 .8l7 6.700-7 6.700z" fill="#40f0f8" stroke="#101010" stroke-width="1"/><path d="M8.500 .8l7 6.700-7 6.700z" fill="#f8f800" stroke="#101010" stroke-width="1"/></svg>
<div style="position:absolute;left:1437px;top:473px;width:17px;height:169px;background:#f0f0f0;"></div>
<svg style="position:absolute;left:1441px;top:479px;overflow:visible" width="8" height="6" viewBox="0 0 8 6"><path d="M.5 5l3.500-3.500 3.500 3.500" fill="none" stroke="#505050" stroke-width="1.700"/></svg>
<svg style="position:absolute;left:1441px;top:613px;overflow:visible" width="8" height="6" viewBox="0 0 8 6"><path d="M.5 1.500l3.500 3.500 3.500-3.500" fill="none" stroke="#505050" stroke-width="1.700"/></svg>
<div style="position:absolute;left:1438px;top:555px;width:15px;height:17px;background:#cdcdcd;"></div>
<div style="position:absolute;left:211px;top:626px;width:1226px;height:16px;background:#f0f0f0;"></div>
<svg style="position:absolute;left:216px;top:630px;overflow:visible" width="6" height="8" viewBox="0 0 6 8"><path d="M5 .5l-3.500 3.500 3.500 3.500" fill="none" stroke="#505050" stroke-width="1.700"/></svg>
<svg style="position:absolute;left:1425px;top:630px;overflow:visible" width="6" height="8" viewBox="0 0 6 8"><path d="M1.500 .5l3.500 3.500-3.500 3.500" fill="none" stroke="#505050" stroke-width="1.700"/></svg>
<div style="position:absolute;left:228px;top:627px;width:686px;height:14px;background:#cdcdcd;"></div>
<div style="position:absolute;left:1458px;top:1px;width:1px;height:643px;background:#a0a0a0;"></div>
</body></html>
